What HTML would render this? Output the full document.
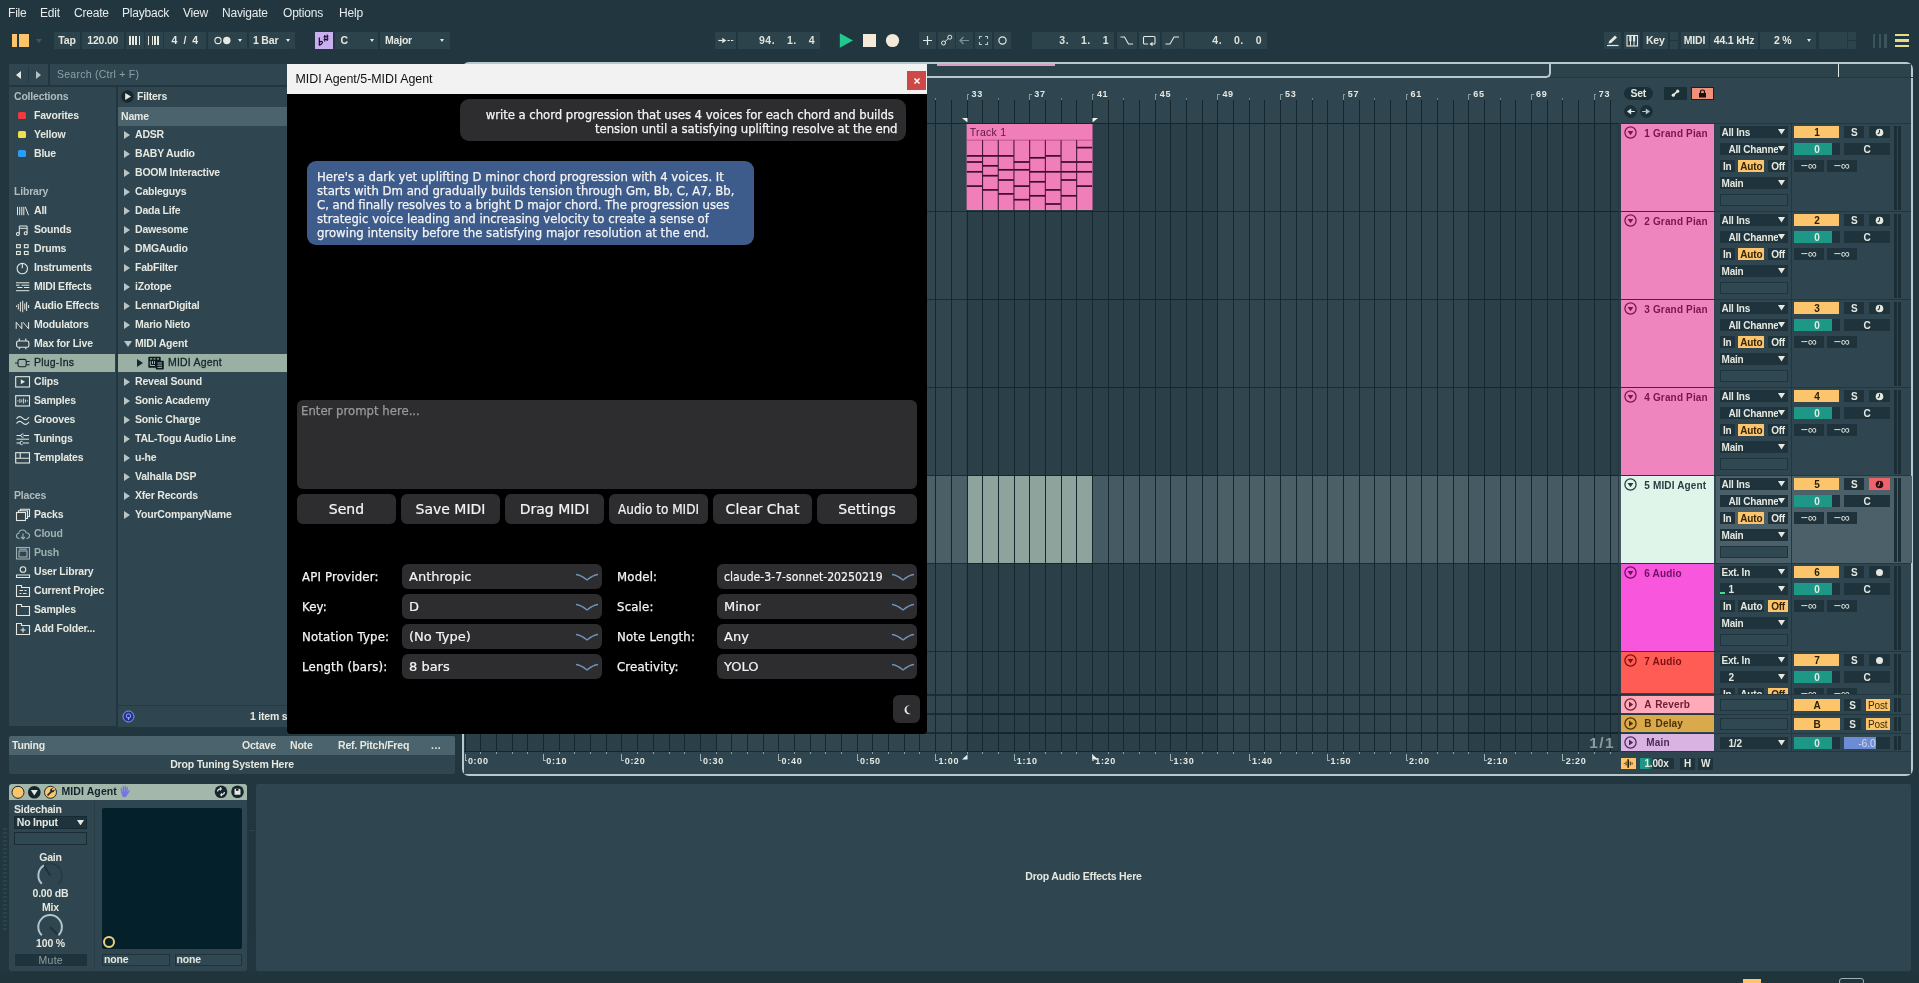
<!DOCTYPE html>
<html lang="en"><head><meta charset="utf-8"><title>MIDI Agent</title>
<style>
*{box-sizing:border-box;margin:0;padding:0}
html,body{width:1919px;height:983px;overflow:hidden;background:#21363e;}
body{position:relative;will-change:transform;font-family:"Liberation Sans",sans-serif;color:#e6e8e0;}
div,svg,span.a{position:absolute}
.t{font-weight:bold;white-space:nowrap;letter-spacing:-0.2px;color:#e6e8e0}
.m{font-family:"Liberation Sans",sans-serif;white-space:nowrap;font-size:12px;letter-spacing:-0.2px;color:#e8ecec}
.mono{font-family:"Liberation Mono",monospace;font-weight:bold;white-space:nowrap;color:#e6e8e0}
.j{font-family:"DejaVu Sans Condensed","DejaVu Sans",sans-serif;white-space:nowrap;color:#f4f4f4;-webkit-text-stroke:0.25px currentColor}
.jw{font-family:"DejaVu Sans",sans-serif;white-space:nowrap;color:#f4f4f4;-webkit-text-stroke:0.2px currentColor}
.tri{width:0;height:0;border-style:solid}
</style></head>
<body>
<div class="m" style="left:8px;top:5px;height:16px;line-height:16px">File</div>
<div class="m" style="left:40px;top:5px;height:16px;line-height:16px">Edit</div>
<div class="m" style="left:74px;top:5px;height:16px;line-height:16px">Create</div>
<div class="m" style="left:122px;top:5px;height:16px;line-height:16px">Playback</div>
<div class="m" style="left:183px;top:5px;height:16px;line-height:16px">View</div>
<div class="m" style="left:222px;top:5px;height:16px;line-height:16px">Navigate</div>
<div class="m" style="left:283px;top:5px;height:16px;line-height:16px">Options</div>
<div class="m" style="left:339px;top:5px;height:16px;line-height:16px">Help</div>
<div style="left:12px;top:34px;width:4.5px;height:13px;background:#fcc56c;"></div>
<div style="left:18.5px;top:34px;width:10.5px;height:13px;background:#fcc56c;"></div>
<div class="tri" style="left:35.5px;top:38.5px;border-width:4px 3.0px 0 3.0px;border-color:#41565f transparent transparent transparent"></div>
<div style="left:54px;top:32px;width:26px;height:17px;background:#2c434c;"><div class="t" style="left:0;top:0;width:26px;height:17px;line-height:17px;text-align:center;font-size:10.5px;">Tap</div></div>
<div style="left:82px;top:32px;width:41.5px;height:17px;background:#2c434c;"><div class="t" style="left:0;top:0;width:41.5px;height:17px;line-height:17px;text-align:center;font-size:10.5px;">120.00</div></div>
<div style="left:125.5px;top:32px;width:18.0px;height:17px;background:#2c434c;"><div style="left:3.2px;top:4.3px;width:2.5px;height:9.2px;background:#e6e8e0"></div><div style="left:6.8px;top:4.3px;width:1.8px;height:9.2px;background:#e6e8e0"></div><div style="left:9.9px;top:4.3px;width:1.3px;height:9.2px;background:#e6e8e0"></div><div style="left:13.3px;top:4.3px;width:1.2px;height:9.2px;background:#e6e8e0"></div></div>
<div style="left:145px;top:32px;width:17.5px;height:17px;background:#2c434c;"><div style="left:2.5px;top:4.3px;width:1.2px;height:9.2px;background:#e6e8e0"></div><div style="left:6.6px;top:4.3px;width:1.5px;height:9.2px;background:#e6e8e0"></div><div style="left:9.4px;top:4.3px;width:1.9px;height:9.2px;background:#e6e8e0"></div><div style="left:12.3px;top:4.3px;width:2.2px;height:9.2px;background:#e6e8e0"></div></div>
<div style="left:164px;top:32px;width:41.5px;height:17px;background:#2c434c;"><div class="t" style="left:0;top:0;width:41.5px;height:17px;line-height:17px;text-align:center;font-size:10.5px;word-spacing:3.5px;">4 / 4</div></div>
<div style="left:207.5px;top:32px;width:39.5px;height:17px;background:#2c434c;"><svg style="left:4px;top:3px" width="22" height="11" viewBox="0 0 22 11"><circle cx="6" cy="5.5" r="3.1" fill="none" stroke="#e6e8e0" stroke-width="1.1"/><circle cx="14.8" cy="5.5" r="3.7" fill="#e6e8e0"/></svg><div class="tri" style="left:30.5px;top:7px;border-width:3.5px 2.5px 0 2.5px;border-color:#e6e8e0 transparent transparent transparent"></div></div>
<div style="left:249px;top:32px;width:45.5px;height:17px;background:#2c434c;"><div class="t" style="left:4px;top:0;height:17px;line-height:17px;font-size:10.5px">1 Bar</div><div class="tri" style="left:36.5px;top:7px;border-width:3.5px 2.5px 0 2.5px;border-color:#e6e8e0 transparent transparent transparent"></div></div>
<div style="left:314.5px;top:32px;width:18px;height:17px;background:#c9aef2;"><svg style="left:0;top:0" width="18" height="17" viewBox="0 0 18 17"><path d="M4.3 5.5V13.5M4.3 10.2Q6 8.6 7.3 9.8Q8 11.5 4.3 13.5" fill="none" stroke="#1c0c28" stroke-width="1.2"/><path d="M9.8 3V9.5M12.2 2.5V9M8.5 5.3L13.5 4.3M8.5 7.8L13.5 6.8" fill="none" stroke="#1c0c28" stroke-width="1.1"/></svg></div>
<div style="left:334.5px;top:32px;width:43.0px;height:17px;background:#2c434c;"><div class="t" style="left:6px;top:0;height:17px;line-height:17px;font-size:10.5px">C</div><div class="tri" style="left:35.5px;top:7px;border-width:3.5px 2.5px 0 2.5px;border-color:#e6e8e0 transparent transparent transparent"></div></div>
<div style="left:380px;top:32px;width:70px;height:17px;background:#2c434c;"><div class="t" style="left:5px;top:0;height:17px;line-height:17px;font-size:10.5px">Major</div><div class="tri" style="left:59.5px;top:7px;border-width:3.5px 2.5px 0 2.5px;border-color:#e6e8e0 transparent transparent transparent"></div></div>
<div style="left:715px;top:32px;width:21px;height:17px;background:#2c434c;"><svg style="left:0;top:0" width="21" height="17" viewBox="0 0 21 17"><path d="M3.3 8.5H8" stroke="#e6e8e0" stroke-width="1.2"/><path d="M7.3 5.8L11.3 8.5L7.3 11.2Z" fill="#e6e8e0"/><path d="M12.5 8.5H14.8M16 8.5H18.3" stroke="#e6e8e0" stroke-width="1.1"/></svg></div>
<div style="left:738px;top:32px;width:82px;height:17px;background:#2c434c;"><div class="t" style="right:5px;top:0;height:17px;line-height:17px;font-size:10.5px;white-space:pre;word-spacing:8.5px;letter-spacing:0.5px;color:#dde2da">94. 1. 4</div></div>
<svg style="left:838px;top:32px" width="64" height="17" viewBox="0 0 64 17"><path d="M1.8 1.2L15 8.5L1.8 15.8Z" fill="#1fc98f"/><rect x="25" y="2" width="13" height="13" fill="#f3ead9"/><circle cx="54.5" cy="8.5" r="6.6" fill="#f3ead9"/></svg>
<div style="left:918.5px;top:32px;width:17.0px;height:17px;background:#2c434c;"><svg style="left:0;top:0" width="17.0" height="17" viewBox="0 0 17 17"><path d="M8.5 4V13M4 8.5H13" stroke="#e6e8e0" stroke-width="1.2"/></svg></div>
<div style="left:937.5px;top:32px;width:17.0px;height:17px;background:#2c434c;"><svg style="left:0;top:0" width="17.0" height="17" viewBox="0 0 17 17"><circle cx="5.5" cy="11" r="2" fill="none" stroke="#e6e8e0"/><circle cx="11.8" cy="5.2" r="2" fill="none" stroke="#e6e8e0"/><path d="M7 9.6L10.3 6.6" stroke="#e6e8e0"/></svg></div>
<div style="left:956px;top:32px;width:17px;height:17px;background:#2c434c;"><svg style="left:0;top:0" width="17" height="17" viewBox="0 0 17 17"><path d="M4 8.5H13M7.5 5L4 8.5L7.5 12" fill="none" stroke="#7f9298" stroke-width="1.2"/></svg></div>
<div style="left:975px;top:32px;width:17px;height:17px;background:#2c434c;"><svg style="left:0;top:0" width="17" height="17" viewBox="0 0 17 17"><path d="M4.5 7V4.5H7M10 4.5H12.5V7M12.5 10V12.5H10M7 12.5H4.5V10" fill="none" stroke="#b9c5c5" stroke-width="1.1"/></svg></div>
<div style="left:994px;top:32px;width:17px;height:17px;background:#2c434c;"><svg style="left:0;top:0" width="17" height="17" viewBox="0 0 17 17"><circle cx="8.5" cy="8.5" r="3.6" fill="none" stroke="#e6e8e0" stroke-width="1.2"/></svg></div>
<div style="left:1032px;top:32px;width:82px;height:17px;background:#2c434c;"><div class="t" style="right:5px;top:0;height:17px;line-height:17px;font-size:10.5px;white-space:pre;word-spacing:8.5px;letter-spacing:0.5px;color:#dde2da">3. 1. 1</div></div>
<div style="left:1116.5px;top:32px;width:20.0px;height:17px;background:#2c434c;"><svg style="left:0;top:0" width="20" height="17" viewBox="0 0 20 17"><path d="M3.5 5H7.5L11.5 12H16" fill="none" stroke="#e6e8e0" stroke-width="1.1"/></svg></div>
<div style="left:1139px;top:32px;width:20.5px;height:17px;background:#2c434c;"><svg style="left:0;top:0" width="20.5" height="17" viewBox="0 0 20.5 17"><path d="M9 12H5.5Q4.5 12 4.5 11V5.5Q4.5 4.5 5.5 4.5H15Q16 4.5 16 5.5V11Q16 12 15 12H12" fill="none" stroke="#e6e8e0" stroke-width="1.1"/><path d="M13.5 9.8L10.5 12L13.5 14.2Z" fill="#e6e8e0"/></svg></div>
<div style="left:1162px;top:32px;width:21px;height:17px;background:#2c434c;"><svg style="left:0;top:0" width="21" height="17" viewBox="0 0 21 17"><path d="M3.5 12H8L12 5H17" fill="none" stroke="#e6e8e0" stroke-width="1.1"/></svg></div>
<div style="left:1185px;top:32px;width:82px;height:17px;background:#2c434c;"><div class="t" style="right:5px;top:0;height:17px;line-height:17px;font-size:10.5px;white-space:pre;word-spacing:8.5px;letter-spacing:0.5px;color:#dde2da">4. 0. 0</div></div>
<div style="left:1603.5px;top:32px;width:17.5px;height:17px;background:#2c434c;"><svg style="left:0;top:0" width="17.5" height="17" viewBox="0 0 17.5 17"><path d="M4.5 11.5L5.2 9L11 3.5L13 5.5L7.2 11Z" fill="#e6e8e0"/><path d="M3 13.5H14.5" stroke="#e6e8e0" stroke-width="1.2"/></svg></div>
<div style="left:1623.5px;top:32px;width:16.5px;height:17px;background:#2c434c;"><svg style="left:0;top:0" width="16.5" height="17" viewBox="0 0 16.5 17"><rect x="3" y="3.5" width="10.5" height="10.5" fill="none" stroke="#e6e8e0" stroke-width="1.1"/><path d="M6.5 9V14M10 9V14" stroke="#e6e8e0" stroke-width="1"/><rect x="5.3" y="3.5" width="2.2" height="5.8" fill="#e6e8e0"/><rect x="9" y="3.5" width="2.2" height="5.8" fill="#e6e8e0"/></svg></div>
<div style="left:1642.5px;top:32px;width:25.5px;height:17px;background:#2c434c;"><div class="t" style="left:0;top:0;width:25.5px;height:17px;line-height:17px;text-align:center;font-size:10.5px;">Key</div></div>
<div style="left:1670px;top:32px;width:8.3px;height:8px;background:#2c434c;"></div>
<div style="left:1670px;top:41px;width:8.3px;height:8px;background:#2c434c;"></div>
<div style="left:1680.5px;top:32px;width:28.0px;height:17px;background:#2c434c;"><div class="t" style="left:0;top:0;width:28.0px;height:17px;line-height:17px;text-align:center;font-size:10.5px;">MIDI</div></div>
<div style="left:1710px;top:32px;width:48px;height:17px;background:#2c434c;"><div class="t" style="left:0;top:0;width:48px;height:17px;line-height:17px;text-align:center;font-size:10.5px;">44.1 kHz</div></div>
<div style="left:1760px;top:32px;width:56px;height:17px;background:#2c434c;"><div class="t" style="left:14px;top:0;height:17px;line-height:17px;font-size:10.5px">2 %</div><div class="tri" style="left:47px;top:7px;border-width:3.5px 2.5px 0 2.5px;border-color:#e6e8e0 transparent transparent transparent"></div></div>
<div style="left:1818.5px;top:32px;width:28.0px;height:17px;background:#2c434c;"></div>
<div style="left:1848px;top:32px;width:8px;height:8px;background:#2c434c;"></div>
<div style="left:1848px;top:41px;width:8px;height:8px;background:#2c434c;"></div>
<div style="left:1873.0px;top:33.5px;width:2.4px;height:14px;background:#3b535c;"></div>
<div style="left:1878.7px;top:33.5px;width:2.4px;height:14px;background:#3b535c;"></div>
<div style="left:1884.4px;top:33.5px;width:2.4px;height:14px;background:#3b535c;"></div>
<div style="left:1895px;top:33.5px;width:13.5px;height:2.6px;background:#e6dc86;"></div>
<div style="left:1895px;top:39.2px;width:13.5px;height:2.6px;background:#e6dc86;"></div>
<div style="left:1895px;top:44.9px;width:13.5px;height:2.6px;background:#e6dc86;"></div>
<div style="left:9px;top:64px;width:39px;height:21px;background:#2f4650;"></div>
<div style="left:28px;top:66px;width:1px;height:17px;background:#253a43;"></div>
<div class="tri" style="left:15.5px;top:70.5px;border-width:4px 5px 4px 0;border-color:transparent #e6e8e0 transparent transparent"></div>
<div class="tri" style="left:35.5px;top:70.5px;border-width:4px 0 4px 5px;border-color:transparent transparent transparent #b5c1c2"></div>
<div style="left:50px;top:64px;width:240px;height:21px;background:#2f4650;"></div>
<div class="t" style="left:57px;top:67.0px;height:14px;line-height:14px;font-size:10.5px;color:#8fa0a4;font-weight:normal;letter-spacing:0.25px">Search (Ctrl + F)</div>
<div style="left:9px;top:87px;width:106.5px;height:639px;background:#2f4650;"></div>
<div style="left:117.5px;top:87px;width:172px;height:640px;background:#2f4650;"></div>
<div style="left:117.5px;top:107px;width:172px;height:19px;background:#4a636c;"></div>
<div style="left:117.5px;top:354px;width:172px;height:17.7px;background:#9bb0a5;"></div>
<div style="left:9px;top:354px;width:106px;height:17.7px;background:#9bb0a5;"></div>
<div style="left:117.5px;top:705px;width:172px;height:1px;background:#253a43;"></div>
<div class="t" style="left:14px;top:89.0px;height:14px;line-height:14px;font-size:10.5px;color:#b0bcbe;">Collections</div>
<div style="left:18px;top:111.5px;width:7.5px;height:7.5px;background:#f03a3a;border-radius:1.5px;"></div>
<div class="t" style="left:34px;top:108.0px;height:14px;line-height:14px;font-size:10.5px;">Favorites</div>
<div style="left:18px;top:130.5px;width:7.5px;height:7.5px;background:#f2e04a;border-radius:1.5px;"></div>
<div class="t" style="left:34px;top:127.0px;height:14px;line-height:14px;font-size:10.5px;">Yellow</div>
<div style="left:18px;top:149.5px;width:7.5px;height:7.5px;background:#2a9df4;border-radius:1.5px;"></div>
<div class="t" style="left:34px;top:146.0px;height:14px;line-height:14px;font-size:10.5px;">Blue</div>
<div class="t" style="left:14px;top:184.0px;height:14px;line-height:14px;font-size:10.5px;color:#b0bcbe;">Library</div>
<div class="t" style="left:14px;top:488.0px;height:14px;line-height:14px;font-size:10.5px;color:#b0bcbe;">Places</div>
<svg style="left:15px;top:203.5px" width="17" height="14" viewBox="0 0 17 14" fill="none" stroke="#e6e8e0" stroke-width="1.1"><path d="M2.5 2.8V11.2M4.7 2.8V11.2M6.8 2.8V11.2M8.8 2.8V11.2M10.3 2.8L13.5 11.2" stroke-width="1"/></svg>
<div class="t" style="left:34px;top:203.0px;height:14px;line-height:14px;font-size:10.5px;">All</div>
<svg style="left:15px;top:222.5px" width="17" height="14" viewBox="0 0 17 14" fill="none" stroke="#e6e8e0" stroke-width="1.1"><path d="M4.3 10.5V3H12.1V9.8M4.3 5.3H12.1" stroke-width="1"/><circle cx="2.9" cy="11" r="1.5"/><circle cx="10.7" cy="10.2" r="1.5"/></svg>
<div class="t" style="left:34px;top:222.0px;height:14px;line-height:14px;font-size:10.5px;">Sounds</div>
<svg style="left:15px;top:241.5px" width="17" height="14" viewBox="0 0 17 14" fill="none" stroke="#e6e8e0" stroke-width="1.1"><rect x="1.6" y="2.7" width="3.7" height="3"/><rect x="9.4" y="2.7" width="3.7" height="3"/><rect x="1.6" y="9.5" width="3.7" height="3"/><rect x="9.4" y="9.5" width="3.7" height="3"/></svg>
<div class="t" style="left:34px;top:241.0px;height:14px;line-height:14px;font-size:10.5px;">Drums</div>
<svg style="left:15px;top:260.5px" width="17" height="14" viewBox="0 0 17 14" fill="none" stroke="#e6e8e0" stroke-width="1.1"><circle cx="7.3" cy="7.6" r="5.2"/><path d="M7.3 2.5V7.3"/></svg>
<div class="t" style="left:34px;top:260.0px;height:14px;line-height:14px;font-size:10.5px;">Instruments</div>
<svg style="left:15px;top:279.5px" width="17" height="14" viewBox="0 0 17 14" fill="none" stroke="#e6e8e0" stroke-width="1.1"><path d="M1 2.8H14.3M1 5.2H4.5M6.5 5.2H14.3M2.2 7.5H7.5M9 7.5H14.3M1 10.7H14.3" stroke-width="1"/></svg>
<div class="t" style="left:34px;top:279.0px;height:14px;line-height:14px;font-size:10.5px;">MIDI Effects</div>
<svg style="left:15px;top:298.5px" width="17" height="14" viewBox="0 0 17 14" fill="none" stroke="#e6e8e0" stroke-width="1.1"><path d="M1.5 6.5V8M3.3 5V10.5M5.4 3V12.5M7.7 1.8V13.2M9.8 4.5V10.5M11.6 3V12M13.6 6V9" stroke-width="1"/></svg>
<div class="t" style="left:34px;top:298.0px;height:14px;line-height:14px;font-size:10.5px;">Audio Effects</div>
<svg style="left:15px;top:317.5px" width="17" height="14" viewBox="0 0 17 14" fill="none" stroke="#e6e8e0" stroke-width="1.1"><path d="M1.2 10.8V4.2L6.8 10.8V4.2M8 4.2L13.6 10.8V4.2" stroke-width="1"/></svg>
<div class="t" style="left:34px;top:317.0px;height:14px;line-height:14px;font-size:10.5px;">Modulators</div>
<svg style="left:15px;top:336.5px" width="17" height="14" viewBox="0 0 17 14" fill="none" stroke="#e6e8e0" stroke-width="1.1"><rect x="1.6" y="4" width="12.3" height="6.2" rx="1.8"/><path d="M4.3 1.5V4M10.8 1.5V4M4.3 10.2V12.2M10.8 10.2V12.2"/></svg>
<div class="t" style="left:34px;top:336.0px;height:14px;line-height:14px;font-size:10.5px;">Max for Live</div>
<svg style="left:15px;top:355.5px" width="17" height="14" viewBox="0 0 17 14" fill="none" stroke="#16262d" stroke-width="1.1"><path d="M-0.5 7H3M11.2 5.5H14.6M11.2 8.7H14.6"/><rect x="3" y="3.4" width="8.2" height="7.3" rx="1.8"/></svg>
<div class="t" style="left:34px;top:355.0px;height:14px;line-height:14px;font-size:10.5px;color:#16262d;font-weight:normal;letter-spacing:0.2px;-webkit-text-stroke:0.3px #16262d;">Plug-Ins</div>
<svg style="left:15px;top:374.5px" width="17" height="14" viewBox="0 0 17 14" fill="none" stroke="#e6e8e0" stroke-width="1.1"><rect x="0.7" y="1.7" width="13.8" height="10.3"/><path d="M5.8 4.3L10 6.8L5.8 9.3Z" fill="#e6e8e0" stroke="none"/></svg>
<div class="t" style="left:34px;top:374.0px;height:14px;line-height:14px;font-size:10.5px;">Clips</div>
<svg style="left:15px;top:393.5px" width="17" height="14" viewBox="0 0 17 14" fill="none" stroke="#e6e8e0" stroke-width="1.1"><rect x="0.7" y="1.7" width="13.8" height="10.3"/><path d="M3 6.3V7.5M4.9 4.8V9M6.8 5.5V8.3M8.6 4.3V9.5M10.5 5.5V8.3M12.3 6.3V7.5" stroke-width="0.9"/></svg>
<div class="t" style="left:34px;top:393.0px;height:14px;line-height:14px;font-size:10.5px;">Samples</div>
<svg style="left:15px;top:412.5px" width="17" height="14" viewBox="0 0 17 14" fill="none" stroke="#e6e8e0" stroke-width="1.1"><path d="M1.5 5.8Q4.2 1.8 7.6 5.2T14 4.3M1.5 10.5Q4.2 6.5 7.6 9.9T14 9"/></svg>
<div class="t" style="left:34px;top:412.0px;height:14px;line-height:14px;font-size:10.5px;">Grooves</div>
<svg style="left:15px;top:431.5px" width="17" height="14" viewBox="0 0 17 14" fill="none" stroke="#e6e8e0" stroke-width="1.1"><path d="M1.5 3.5H6M8.5 3.5H14M1.5 7.2H14M1.5 11H5M7.5 11H14M8.5 2H7.5Q6 2 6 3.5Q6 5.2 7.5 5.2H8.5M7.5 9.3H6.5Q5 9.3 5 11Q5 12.6 6.5 12.6H7.5" stroke-width="1"/></svg>
<div class="t" style="left:34px;top:431.0px;height:14px;line-height:14px;font-size:10.5px;">Tunings</div>
<svg style="left:15px;top:450.5px" width="17" height="14" viewBox="0 0 17 14" fill="none" stroke="#e6e8e0" stroke-width="1.1"><rect x="0.7" y="1.7" width="13.8" height="10.3"/><path d="M0.7 7.3H14.5M5.2 1.7V7.3"/></svg>
<div class="t" style="left:34px;top:450.0px;height:14px;line-height:14px;font-size:10.5px;">Templates</div>
<svg style="left:15px;top:507.5px" width="17" height="14" viewBox="0 0 17 14" fill="none" stroke="#e6e8e0" stroke-width="1.1"><rect x="1.5" y="4.5" width="9" height="8"/><path d="M3.5 4.5V2.8H12.5V10.5H10.5M5.5 2.8V1.2H14.5V8.5H12.5"/></svg>
<div class="t" style="left:34px;top:507.0px;height:14px;line-height:14px;font-size:10.5px;color:#e6e8e0;">Packs</div>
<svg style="left:15px;top:526.5px" width="17" height="14" viewBox="0 0 17 14" fill="none" stroke="#9fb0b3" stroke-width="1.1"><path d="M4.5 11.5H3.8Q1.5 11 1.5 8.8Q1.5 6.8 3.8 6.3Q4.2 3 7.5 3Q10.5 3 11.2 5.8Q14.5 6 14.5 8.8Q14.5 11 12 11.5H11.5"/><path d="M8 6.5V12M6 10L8 12L10 10"/></svg>
<div class="t" style="left:34px;top:526.0px;height:14px;line-height:14px;font-size:10.5px;color:#9fb0b3;">Cloud</div>
<svg style="left:15px;top:545.5px" width="17" height="14" viewBox="0 0 17 14" fill="none" stroke="#9fb0b3" stroke-width="1.1"><rect x="1.5" y="1.5" width="13" height="11.5"/><rect x="4" y="5" width="8" height="6"/><path d="M4 3.2H12"/></svg>
<div class="t" style="left:34px;top:545.0px;height:14px;line-height:14px;font-size:10.5px;color:#9fb0b3;">Push</div>
<svg style="left:15px;top:564.5px" width="17" height="14" viewBox="0 0 17 14" fill="none" stroke="#e6e8e0" stroke-width="1.1"><circle cx="8" cy="4.5" r="2.8"/><path d="M1.5 12.5V10H14.5V12.5Z"/></svg>
<div class="t" style="left:34px;top:564.0px;height:14px;line-height:14px;font-size:10.5px;color:#e6e8e0;">User Library</div>
<svg style="left:15px;top:583.5px" width="17" height="14" viewBox="0 0 17 14" fill="none" stroke="#e6e8e0" stroke-width="1.1"><path d="M1.5 12.5V1.5H6.5V3.5H14.5V12.5Z"/><path d="M4.5 6.5H8M9.5 6.5H11.5M4.5 9.5H6.5M8 9.5H11.5"/></svg>
<div class="t" style="left:34px;top:583.0px;height:14px;line-height:14px;font-size:10.5px;color:#e6e8e0;">Current Projec</div>
<svg style="left:15px;top:602.5px" width="17" height="14" viewBox="0 0 17 14" fill="none" stroke="#e6e8e0" stroke-width="1.1"><path d="M1.5 12.5V1.5H6.5V3.5H14.5V12.5Z"/></svg>
<div class="t" style="left:34px;top:602.0px;height:14px;line-height:14px;font-size:10.5px;color:#e6e8e0;">Samples</div>
<svg style="left:15px;top:621.5px" width="17" height="14" viewBox="0 0 17 14" fill="none" stroke="#e6e8e0" stroke-width="1.1"><path d="M1.5 12.5V1.5H6.5V3.5H14.5V12.5Z"/><path d="M8 5.5V10.5M5.5 8H10.5"/></svg>
<div class="t" style="left:34px;top:621.0px;height:14px;line-height:14px;font-size:10.5px;color:#e6e8e0;">Add Folder...</div>
<svg style="left:121px;top:90px" width="13" height="13" viewBox="0 0 13 13"><circle cx="6.5" cy="6.5" r="6.2" fill="#16262d"/><path d="M4.2 3L10 6.5L4.2 10Z" fill="#e6e8e0"/></svg>
<div class="t" style="left:137px;top:89.0px;height:14px;line-height:14px;font-size:10.5px;">Filters</div>
<div class="t" style="left:121px;top:109.0px;height:14px;line-height:14px;font-size:10.5px;">Name</div>
<div class="tri" style="left:124px;top:130.5px;border-width:4px 0 4px 6px;border-color:transparent transparent transparent #b9c5c5"></div>
<div class="t" style="left:135px;top:127.0px;height:14px;line-height:14px;font-size:10.5px;">ADSR</div>
<div class="tri" style="left:124px;top:149.5px;border-width:4px 0 4px 6px;border-color:transparent transparent transparent #b9c5c5"></div>
<div class="t" style="left:135px;top:146.0px;height:14px;line-height:14px;font-size:10.5px;">BABY Audio</div>
<div class="tri" style="left:124px;top:168.5px;border-width:4px 0 4px 6px;border-color:transparent transparent transparent #b9c5c5"></div>
<div class="t" style="left:135px;top:165.0px;height:14px;line-height:14px;font-size:10.5px;">BOOM Interactive</div>
<div class="tri" style="left:124px;top:187.5px;border-width:4px 0 4px 6px;border-color:transparent transparent transparent #b9c5c5"></div>
<div class="t" style="left:135px;top:184.0px;height:14px;line-height:14px;font-size:10.5px;">Cableguys</div>
<div class="tri" style="left:124px;top:206.5px;border-width:4px 0 4px 6px;border-color:transparent transparent transparent #b9c5c5"></div>
<div class="t" style="left:135px;top:203.0px;height:14px;line-height:14px;font-size:10.5px;">Dada Life</div>
<div class="tri" style="left:124px;top:225.5px;border-width:4px 0 4px 6px;border-color:transparent transparent transparent #b9c5c5"></div>
<div class="t" style="left:135px;top:222.0px;height:14px;line-height:14px;font-size:10.5px;">Dawesome</div>
<div class="tri" style="left:124px;top:244.5px;border-width:4px 0 4px 6px;border-color:transparent transparent transparent #b9c5c5"></div>
<div class="t" style="left:135px;top:241.0px;height:14px;line-height:14px;font-size:10.5px;">DMGAudio</div>
<div class="tri" style="left:124px;top:263.5px;border-width:4px 0 4px 6px;border-color:transparent transparent transparent #b9c5c5"></div>
<div class="t" style="left:135px;top:260.0px;height:14px;line-height:14px;font-size:10.5px;">FabFilter</div>
<div class="tri" style="left:124px;top:282.5px;border-width:4px 0 4px 6px;border-color:transparent transparent transparent #b9c5c5"></div>
<div class="t" style="left:135px;top:279.0px;height:14px;line-height:14px;font-size:10.5px;">iZotope</div>
<div class="tri" style="left:124px;top:301.5px;border-width:4px 0 4px 6px;border-color:transparent transparent transparent #b9c5c5"></div>
<div class="t" style="left:135px;top:298.0px;height:14px;line-height:14px;font-size:10.5px;">LennarDigital</div>
<div class="tri" style="left:124px;top:320.5px;border-width:4px 0 4px 6px;border-color:transparent transparent transparent #b9c5c5"></div>
<div class="t" style="left:135px;top:317.0px;height:14px;line-height:14px;font-size:10.5px;">Mario Nieto</div>
<div class="tri" style="left:123.5px;top:340.5px;border-width:6px 4px 0 4px;border-color:#b9c5c5 transparent transparent transparent"></div>
<div class="t" style="left:135px;top:336.0px;height:14px;line-height:14px;font-size:10.5px;">MIDI Agent</div>
<div class="tri" style="left:137px;top:358.5px;border-width:4px 0 4px 6px;border-color:transparent transparent transparent #16262d"></div>
<svg style="left:148px;top:356.0px" width="16" height="14" viewBox="0 0 16 14"><rect x="0.3" y="0.8" width="12.4" height="11" rx="0.8" fill="#0e1a20"/><path d="M2 2.8H4.2M5.5 2.8H7.5M9 2.8H11" stroke="#9bb0a5" stroke-width="1.2"/><path d="M2.3 5V9.5H7M4.5 5V8M6.5 5V8" fill="none" stroke="#9bb0a5" stroke-width="1"/><rect x="7.8" y="4.8" width="8" height="8.7" rx="0.8" fill="#0e1a20"/><path d="M9.5 7H14M9.5 9.2H14M9.5 11.4H14" stroke="#9bb0a5" stroke-width="1"/></svg>
<div class="t" style="left:168px;top:355.2px;height:14px;line-height:14px;font-size:10.5px;color:#16262d;font-weight:normal;letter-spacing:0.2px;-webkit-text-stroke:0.3px #16262d;">MIDI Agent</div>
<div class="tri" style="left:124px;top:377.5px;border-width:4px 0 4px 6px;border-color:transparent transparent transparent #b9c5c5"></div>
<div class="t" style="left:135px;top:374.0px;height:14px;line-height:14px;font-size:10.5px;">Reveal Sound</div>
<div class="tri" style="left:124px;top:396.5px;border-width:4px 0 4px 6px;border-color:transparent transparent transparent #b9c5c5"></div>
<div class="t" style="left:135px;top:393.0px;height:14px;line-height:14px;font-size:10.5px;">Sonic Academy</div>
<div class="tri" style="left:124px;top:415.5px;border-width:4px 0 4px 6px;border-color:transparent transparent transparent #b9c5c5"></div>
<div class="t" style="left:135px;top:412.0px;height:14px;line-height:14px;font-size:10.5px;">Sonic Charge</div>
<div class="tri" style="left:124px;top:434.5px;border-width:4px 0 4px 6px;border-color:transparent transparent transparent #b9c5c5"></div>
<div class="t" style="left:135px;top:431.0px;height:14px;line-height:14px;font-size:10.5px;">TAL-Togu Audio Line</div>
<div class="tri" style="left:124px;top:453.5px;border-width:4px 0 4px 6px;border-color:transparent transparent transparent #b9c5c5"></div>
<div class="t" style="left:135px;top:450.0px;height:14px;line-height:14px;font-size:10.5px;">u-he</div>
<div class="tri" style="left:124px;top:472.5px;border-width:4px 0 4px 6px;border-color:transparent transparent transparent #b9c5c5"></div>
<div class="t" style="left:135px;top:469.0px;height:14px;line-height:14px;font-size:10.5px;">Valhalla DSP</div>
<div class="tri" style="left:124px;top:491.5px;border-width:4px 0 4px 6px;border-color:transparent transparent transparent #b9c5c5"></div>
<div class="t" style="left:135px;top:488.0px;height:14px;line-height:14px;font-size:10.5px;">Xfer Records</div>
<div class="tri" style="left:124px;top:510.5px;border-width:4px 0 4px 6px;border-color:transparent transparent transparent #b9c5c5"></div>
<div class="t" style="left:135px;top:507.0px;height:14px;line-height:14px;font-size:10.5px;">YourCompanyName</div>
<svg style="left:122px;top:710px" width="13" height="13" viewBox="0 0 13 13"><circle cx="6.5" cy="6.5" r="5.5" fill="#22309a" stroke="#8ea0c8" stroke-width="1"/><circle cx="6.5" cy="6" r="2.2" fill="none" stroke="#9fb4e0" stroke-width="0.9"/><path d="M6.5 7V10" stroke="#9fb4e0" stroke-width="0.9"/></svg>
<div class="t" style="left:250px;top:709.0px;height:14px;line-height:14px;font-size:10.5px;">1 item selected</div>
<div style="left:9px;top:736px;width:446px;height:37.5px;background:#2f4650;border-radius:2px;"></div>
<div style="left:9px;top:736px;width:446px;height:18.5px;background:#4a636c;border-radius:2px 2px 0 0;"></div>
<div class="t" style="left:12px;top:738.0px;height:14px;line-height:14px;font-size:10.5px;">Tuning</div>
<div class="t" style="left:242px;top:738.0px;height:14px;line-height:14px;font-size:10.5px;">Octave</div>
<div class="t" style="left:290px;top:738.0px;height:14px;line-height:14px;font-size:10.5px;">Note</div>
<div class="t" style="left:338px;top:738.0px;height:14px;line-height:14px;font-size:10.5px;">Ref. Pitch/Freq</div>
<div class="t" style="left:431px;top:737.5px;height:14px;line-height:14px;font-size:10.5px;letter-spacing:0.5px">...</div>
<div class="t" style="left:9px;top:757.0px;height:14px;line-height:14px;font-size:10.5px;width:446px;text-align:center;">Drop Tuning System Here</div>
<div style="left:462px;top:62px;width:1451px;height:714px;background:#2f4650;border:2px solid #b7c9cc;border-radius:7px;"></div>
<div style="left:464px;top:64px;width:1447px;height:13px;background:#2c434c;"></div>
<div style="left:1550px;top:76.5px;width:1361px;height:1.5px;background:#22373f;"></div>
<div style="left:464px;top:63px;width:1087px;height:15px;border-right:2.5px solid #b7c9cc;border-bottom:2.5px solid #b7c9cc;border-bottom-right-radius:5px;"></div>
<div style="left:936.5px;top:63.5px;width:118px;height:2.5px;background:#d9a0c6;"></div>
<div style="left:1837.5px;top:64px;width:1.5px;height:13px;background:#dfe8e8;"></div>
<div style="left:464px;top:100px;width:1156.5px;height:652px;background:#15262d;"></div>
<div style="left:464px;top:100px;width:1156.5px;height:23px;background:#2f4650;"></div>
<div style="left:464px;top:124px;width:1156.5px;height:87px;background:#2b3f49;"></div>
<div style="left:464px;top:212px;width:1156.5px;height:87px;background:#2b3f49;"></div>
<div style="left:464px;top:300px;width:1156.5px;height:87px;background:#2b3f49;"></div>
<div style="left:464px;top:388px;width:1156.5px;height:87px;background:#2b3f49;"></div>
<div style="left:464px;top:476px;width:1156.5px;height:87px;background:#465a63;"></div>
<div style="left:464px;top:564px;width:1156.5px;height:87px;background:#2b3f49;"></div>
<div style="left:464px;top:652px;width:1156.5px;height:42px;background:#2b3f49;"></div>
<div style="left:464px;top:696px;width:1156.5px;height:17px;background:#2b3f49;"></div>
<div style="left:464px;top:715px;width:1156.5px;height:17px;background:#2b3f49;"></div>
<div style="left:464px;top:734px;width:1156.5px;height:17px;background:#2b3f49;"></div>
<div style="left:715.5px;top:124px;width:250.9px;height:628px;background:rgba(255,255,255,0.032);"></div>
<div style="left:1217.4px;top:124px;width:250.9px;height:628px;background:rgba(255,255,255,0.032);"></div>
<div style="left:966.5px;top:476px;width:126px;height:87px;background:#8da39b;"></div>
<div style="left:464px;top:100px;width:1156.5px;height:652px;"><div style="left:0.6px;top:0;width:1px;height:652px;background:#15262d"></div><div style="left:16.3px;top:0;width:1px;height:652px;background:#15262d"></div><div style="left:32.0px;top:0;width:1px;height:652px;background:#15262d"></div><div style="left:47.6px;top:0;width:1px;height:652px;background:#15262d"></div><div style="left:63.3px;top:0;width:1px;height:652px;background:#15262d"></div><div style="left:79.0px;top:0;width:1px;height:652px;background:#15262d"></div><div style="left:94.7px;top:0;width:1px;height:652px;background:#15262d"></div><div style="left:110.4px;top:0;width:1px;height:652px;background:#15262d"></div><div style="left:126.1px;top:0;width:1px;height:652px;background:#15262d"></div><div style="left:141.7px;top:0;width:1px;height:652px;background:#15262d"></div><div style="left:157.4px;top:0;width:1px;height:652px;background:#15262d"></div><div style="left:173.1px;top:0;width:1px;height:652px;background:#15262d"></div><div style="left:188.8px;top:0;width:1px;height:652px;background:#15262d"></div><div style="left:204.5px;top:0;width:1px;height:652px;background:#15262d"></div><div style="left:220.2px;top:0;width:1px;height:652px;background:#15262d"></div><div style="left:235.8px;top:0;width:1px;height:652px;background:#15262d"></div><div style="left:251.5px;top:0;width:1px;height:652px;background:#15262d"></div><div style="left:267.2px;top:0;width:1px;height:652px;background:#15262d"></div><div style="left:282.9px;top:0;width:1px;height:652px;background:#15262d"></div><div style="left:298.6px;top:0;width:1px;height:652px;background:#15262d"></div><div style="left:314.3px;top:0;width:1px;height:652px;background:#15262d"></div><div style="left:329.9px;top:0;width:1px;height:652px;background:#15262d"></div><div style="left:345.6px;top:0;width:1px;height:652px;background:#15262d"></div><div style="left:361.3px;top:0;width:1px;height:652px;background:#15262d"></div><div style="left:377.0px;top:0;width:1px;height:652px;background:#15262d"></div><div style="left:392.7px;top:0;width:1px;height:652px;background:#15262d"></div><div style="left:408.4px;top:0;width:1px;height:652px;background:#15262d"></div><div style="left:424.0px;top:0;width:1px;height:652px;background:#15262d"></div><div style="left:439.7px;top:0;width:1px;height:652px;background:#15262d"></div><div style="left:455.4px;top:0;width:1px;height:652px;background:#15262d"></div><div style="left:471.1px;top:0;width:1px;height:652px;background:#15262d"></div><div style="left:486.8px;top:0;width:1px;height:652px;background:#15262d"></div><div style="left:502.5px;top:0;width:1px;height:652px;background:#15262d"></div><div style="left:518.1px;top:0;width:1px;height:652px;background:#15262d"></div><div style="left:533.8px;top:0;width:1px;height:652px;background:#15262d"></div><div style="left:549.5px;top:0;width:1px;height:652px;background:#15262d"></div><div style="left:565.2px;top:0;width:1px;height:652px;background:#15262d"></div><div style="left:580.9px;top:0;width:1px;height:652px;background:#15262d"></div><div style="left:596.6px;top:0;width:1px;height:652px;background:#15262d"></div><div style="left:612.2px;top:0;width:1px;height:652px;background:#15262d"></div><div style="left:627.9px;top:0;width:1px;height:652px;background:#15262d"></div><div style="left:643.6px;top:0;width:1px;height:652px;background:#15262d"></div><div style="left:659.3px;top:0;width:1px;height:652px;background:#15262d"></div><div style="left:675.0px;top:0;width:1px;height:652px;background:#15262d"></div><div style="left:690.7px;top:0;width:1px;height:652px;background:#15262d"></div><div style="left:706.3px;top:0;width:1px;height:652px;background:#15262d"></div><div style="left:722.0px;top:0;width:1px;height:652px;background:#15262d"></div><div style="left:737.7px;top:0;width:1px;height:652px;background:#15262d"></div><div style="left:753.4px;top:0;width:1px;height:652px;background:#15262d"></div><div style="left:769.1px;top:0;width:1px;height:652px;background:#15262d"></div><div style="left:784.8px;top:0;width:1px;height:652px;background:#15262d"></div><div style="left:800.4px;top:0;width:1px;height:652px;background:#15262d"></div><div style="left:816.1px;top:0;width:1px;height:652px;background:#15262d"></div><div style="left:831.8px;top:0;width:1px;height:652px;background:#15262d"></div><div style="left:847.5px;top:0;width:1px;height:652px;background:#15262d"></div><div style="left:863.2px;top:0;width:1px;height:652px;background:#15262d"></div><div style="left:878.8px;top:0;width:1px;height:652px;background:#15262d"></div><div style="left:894.5px;top:0;width:1px;height:652px;background:#15262d"></div><div style="left:910.2px;top:0;width:1px;height:652px;background:#15262d"></div><div style="left:925.9px;top:0;width:1px;height:652px;background:#15262d"></div><div style="left:941.6px;top:0;width:1px;height:652px;background:#15262d"></div><div style="left:957.3px;top:0;width:1px;height:652px;background:#15262d"></div><div style="left:972.9px;top:0;width:1px;height:652px;background:#15262d"></div><div style="left:988.6px;top:0;width:1px;height:652px;background:#15262d"></div><div style="left:1004.3px;top:0;width:1px;height:652px;background:#15262d"></div><div style="left:1020.0px;top:0;width:1px;height:652px;background:#15262d"></div><div style="left:1035.7px;top:0;width:1px;height:652px;background:#15262d"></div><div style="left:1051.4px;top:0;width:1px;height:652px;background:#15262d"></div><div style="left:1067.0px;top:0;width:1px;height:652px;background:#15262d"></div><div style="left:1082.7px;top:0;width:1px;height:652px;background:#15262d"></div><div style="left:1098.4px;top:0;width:1px;height:652px;background:#15262d"></div><div style="left:1114.1px;top:0;width:1px;height:652px;background:#15262d"></div><div style="left:1129.8px;top:0;width:1px;height:652px;background:#15262d"></div><div style="left:1145.5px;top:0;width:1px;height:652px;background:#15262d"></div></div>
<div style="left:966.5px;top:93.5px;width:1px;height:6.5px;background:#8499a0;"></div>
<div style="left:966.5px;top:93.5px;width:2.5px;height:1px;background:#8499a0;"></div>
<div class="t" style="left:971.5px;top:86.8px;height:14px;line-height:14px;font-size:9px;letter-spacing:0.7px;">33</div>
<div style="left:1029.2px;top:93.5px;width:1px;height:6.5px;background:#8499a0;"></div>
<div style="left:1029.2px;top:93.5px;width:2.5px;height:1px;background:#8499a0;"></div>
<div class="t" style="left:1034.2px;top:86.8px;height:14px;line-height:14px;font-size:9px;letter-spacing:0.7px;">37</div>
<div style="left:1091.9px;top:93.5px;width:1px;height:6.5px;background:#8499a0;"></div>
<div style="left:1091.9px;top:93.5px;width:2.5px;height:1px;background:#8499a0;"></div>
<div class="t" style="left:1096.9px;top:86.8px;height:14px;line-height:14px;font-size:9px;letter-spacing:0.7px;">41</div>
<div style="left:1154.7px;top:93.5px;width:1px;height:6.5px;background:#8499a0;"></div>
<div style="left:1154.7px;top:93.5px;width:2.5px;height:1px;background:#8499a0;"></div>
<div class="t" style="left:1159.7px;top:86.8px;height:14px;line-height:14px;font-size:9px;letter-spacing:0.7px;">45</div>
<div style="left:1217.4px;top:93.5px;width:1px;height:6.5px;background:#8499a0;"></div>
<div style="left:1217.4px;top:93.5px;width:2.5px;height:1px;background:#8499a0;"></div>
<div class="t" style="left:1222.4px;top:86.8px;height:14px;line-height:14px;font-size:9px;letter-spacing:0.7px;">49</div>
<div style="left:1280.1px;top:93.5px;width:1px;height:6.5px;background:#8499a0;"></div>
<div style="left:1280.1px;top:93.5px;width:2.5px;height:1px;background:#8499a0;"></div>
<div class="t" style="left:1285.1px;top:86.8px;height:14px;line-height:14px;font-size:9px;letter-spacing:0.7px;">53</div>
<div style="left:1342.8px;top:93.5px;width:1px;height:6.5px;background:#8499a0;"></div>
<div style="left:1342.8px;top:93.5px;width:2.5px;height:1px;background:#8499a0;"></div>
<div class="t" style="left:1347.8px;top:86.8px;height:14px;line-height:14px;font-size:9px;letter-spacing:0.7px;">57</div>
<div style="left:1405.6px;top:93.5px;width:1px;height:6.5px;background:#8499a0;"></div>
<div style="left:1405.6px;top:93.5px;width:2.5px;height:1px;background:#8499a0;"></div>
<div class="t" style="left:1410.6px;top:86.8px;height:14px;line-height:14px;font-size:9px;letter-spacing:0.7px;">61</div>
<div style="left:1468.3px;top:93.5px;width:1px;height:6.5px;background:#8499a0;"></div>
<div style="left:1468.3px;top:93.5px;width:2.5px;height:1px;background:#8499a0;"></div>
<div class="t" style="left:1473.3px;top:86.8px;height:14px;line-height:14px;font-size:9px;letter-spacing:0.7px;">65</div>
<div style="left:1531.0px;top:93.5px;width:1px;height:6.5px;background:#8499a0;"></div>
<div style="left:1531.0px;top:93.5px;width:2.5px;height:1px;background:#8499a0;"></div>
<div class="t" style="left:1536.0px;top:86.8px;height:14px;line-height:14px;font-size:9px;letter-spacing:0.7px;">69</div>
<div style="left:1593.8px;top:93.5px;width:1px;height:6.5px;background:#8499a0;"></div>
<div style="left:1593.8px;top:93.5px;width:2.5px;height:1px;background:#8499a0;"></div>
<div class="t" style="left:1598.8px;top:86.8px;height:14px;line-height:14px;font-size:9px;letter-spacing:0.7px;">73</div>
<div style="left:935.1px;top:98px;width:1px;height:1.5px;background:#6f848a;"></div>
<div style="left:997.8px;top:98px;width:1px;height:1.5px;background:#6f848a;"></div>
<div style="left:1060.6px;top:98px;width:1px;height:1.5px;background:#6f848a;"></div>
<div style="left:1123.3px;top:98px;width:1px;height:1.5px;background:#6f848a;"></div>
<div style="left:1186.0px;top:98px;width:1px;height:1.5px;background:#6f848a;"></div>
<div style="left:1248.8px;top:98px;width:1px;height:1.5px;background:#6f848a;"></div>
<div style="left:1311.5px;top:98px;width:1px;height:1.5px;background:#6f848a;"></div>
<div style="left:1374.2px;top:98px;width:1px;height:1.5px;background:#6f848a;"></div>
<div style="left:1436.9px;top:98px;width:1px;height:1.5px;background:#6f848a;"></div>
<div style="left:1499.7px;top:98px;width:1px;height:1.5px;background:#6f848a;"></div>
<div style="left:1562.4px;top:98px;width:1px;height:1.5px;background:#6f848a;"></div>
<svg style="left:961px;top:117px" width="8" height="6" viewBox="0 0 8 6"><path d="M1 1H6.5V5.5Z" fill="#f0f4f0"/></svg>
<svg style="left:1091px;top:117px" width="8" height="6" viewBox="0 0 8 6"><path d="M1.5 1H7V1L1.5 5.5Z" fill="#f0f4f0"/></svg>
<svg style="left:960px;top:120px" width="140" height="95" viewBox="960 120 140 95"><rect x="966.6" y="124" width="126.0" height="86" fill="#f07fb9"/><rect x="966.6" y="139.7" width="126.0" height="0.8" fill="#b0457f"/><rect x="982.0" y="140.2" width="1.1" height="69.8" fill="#4a1838"/><rect x="997.7" y="140.2" width="1.1" height="69.8" fill="#4a1838"/><rect x="1013.4" y="140.2" width="1.1" height="69.8" fill="#4a1838"/><rect x="1029.1" y="140.2" width="1.1" height="69.8" fill="#4a1838"/><rect x="1044.8" y="140.2" width="1.1" height="69.8" fill="#4a1838"/><rect x="1060.5" y="140.2" width="1.1" height="69.8" fill="#4a1838"/><rect x="1076.1" y="140.2" width="1.1" height="69.8" fill="#4a1838"/><rect x="966.9" y="155.05" width="15.48" height="1.7" fill="#3d0a2e"/><rect x="966.9" y="161.15" width="15.48" height="1.7" fill="#3d0a2e"/><rect x="966.9" y="170.95" width="15.48" height="1.7" fill="#3d0a2e"/><rect x="966.9" y="185.25" width="15.48" height="1.7" fill="#3d0a2e"/><rect x="982.5" y="155.05" width="15.48" height="1.7" fill="#3d0a2e"/><rect x="982.5" y="164.95" width="15.48" height="1.7" fill="#3d0a2e"/><rect x="982.5" y="174.85" width="15.48" height="1.7" fill="#3d0a2e"/><rect x="982.5" y="189.05" width="15.48" height="1.7" fill="#3d0a2e"/><rect x="998.2" y="155.05" width="15.48" height="1.7" fill="#3d0a2e"/><rect x="998.2" y="168.95" width="15.48" height="1.7" fill="#3d0a2e"/><rect x="998.2" y="179.15" width="15.48" height="1.7" fill="#3d0a2e"/><rect x="998.2" y="193.05" width="15.48" height="1.7" fill="#3d0a2e"/><rect x="1013.9" y="161.15" width="15.48" height="1.7" fill="#3d0a2e"/><rect x="1013.9" y="168.95" width="15.48" height="1.7" fill="#3d0a2e"/><rect x="1013.9" y="185.25" width="15.48" height="1.7" fill="#3d0a2e"/><rect x="1013.9" y="198.85" width="15.48" height="1.7" fill="#3d0a2e"/><rect x="1029.6" y="156.95" width="15.48" height="1.7" fill="#3d0a2e"/><rect x="1029.6" y="170.95" width="15.48" height="1.7" fill="#3d0a2e"/><rect x="1029.6" y="180.95" width="15.48" height="1.7" fill="#3d0a2e"/><rect x="1029.6" y="194.95" width="15.48" height="1.7" fill="#3d0a2e"/><rect x="1045.3" y="155.05" width="15.48" height="1.7" fill="#3d0a2e"/><rect x="1045.3" y="170.95" width="15.48" height="1.7" fill="#3d0a2e"/><rect x="1045.3" y="189.05" width="15.48" height="1.7" fill="#3d0a2e"/><rect x="1045.3" y="203.15" width="15.48" height="1.7" fill="#3d0a2e"/><rect x="1061.0" y="161.15" width="15.48" height="1.7" fill="#3d0a2e"/><rect x="1061.0" y="170.95" width="15.48" height="1.7" fill="#3d0a2e"/><rect x="1061.0" y="179.15" width="15.48" height="1.7" fill="#3d0a2e"/><rect x="1061.0" y="194.95" width="15.48" height="1.7" fill="#3d0a2e"/><rect x="1076.6" y="146.75" width="15.48" height="1.7" fill="#3d0a2e"/><rect x="1076.6" y="161.15" width="15.48" height="1.7" fill="#3d0a2e"/><rect x="1076.6" y="170.95" width="15.48" height="1.7" fill="#3d0a2e"/><rect x="1076.6" y="185.25" width="15.48" height="1.7" fill="#3d0a2e"/></svg>
<div class="t" style="left:969.8px;top:125.1px;height:14px;line-height:14px;font-size:10.5px;color:#5c1440;font-weight:normal;letter-spacing:0.3px">Track 1</div>
<div style="left:464px;top:752px;width:1156.5px;height:22px;background:#2f4650;"></div>
<div style="left:464.6px;top:753.5px;width:1px;height:7.5px;background:#9fb0b3;"></div>
<div style="left:464.6px;top:760px;width:2.5px;height:1px;background:#9fb0b3;"></div>
<div class="t" style="left:467.9px;top:753.7px;height:14px;line-height:14px;font-size:9px;letter-spacing:0.7px;">0:00</div>
<div style="left:543.0px;top:753.5px;width:1px;height:7.5px;background:#9fb0b3;"></div>
<div style="left:543.0px;top:760px;width:2.5px;height:1px;background:#9fb0b3;"></div>
<div class="t" style="left:546.3px;top:753.7px;height:14px;line-height:14px;font-size:9px;letter-spacing:0.7px;">0:10</div>
<div style="left:621.4px;top:753.5px;width:1px;height:7.5px;background:#9fb0b3;"></div>
<div style="left:621.4px;top:760px;width:2.5px;height:1px;background:#9fb0b3;"></div>
<div class="t" style="left:624.7px;top:753.7px;height:14px;line-height:14px;font-size:9px;letter-spacing:0.7px;">0:20</div>
<div style="left:699.8px;top:753.5px;width:1px;height:7.5px;background:#9fb0b3;"></div>
<div style="left:699.8px;top:760px;width:2.5px;height:1px;background:#9fb0b3;"></div>
<div class="t" style="left:703.1px;top:753.7px;height:14px;line-height:14px;font-size:9px;letter-spacing:0.7px;">0:30</div>
<div style="left:778.3px;top:753.5px;width:1px;height:7.5px;background:#9fb0b3;"></div>
<div style="left:778.3px;top:760px;width:2.5px;height:1px;background:#9fb0b3;"></div>
<div class="t" style="left:781.6px;top:753.7px;height:14px;line-height:14px;font-size:9px;letter-spacing:0.7px;">0:40</div>
<div style="left:856.7px;top:753.5px;width:1px;height:7.5px;background:#9fb0b3;"></div>
<div style="left:856.7px;top:760px;width:2.5px;height:1px;background:#9fb0b3;"></div>
<div class="t" style="left:860.0px;top:753.7px;height:14px;line-height:14px;font-size:9px;letter-spacing:0.7px;">0:50</div>
<div style="left:935.1px;top:753.5px;width:1px;height:7.5px;background:#9fb0b3;"></div>
<div style="left:935.1px;top:760px;width:2.5px;height:1px;background:#9fb0b3;"></div>
<div class="t" style="left:938.4px;top:753.7px;height:14px;line-height:14px;font-size:9px;letter-spacing:0.7px;">1:00</div>
<div style="left:1013.5px;top:753.5px;width:1px;height:7.5px;background:#9fb0b3;"></div>
<div style="left:1013.5px;top:760px;width:2.5px;height:1px;background:#9fb0b3;"></div>
<div class="t" style="left:1016.8px;top:753.7px;height:14px;line-height:14px;font-size:9px;letter-spacing:0.7px;">1:10</div>
<div style="left:1091.9px;top:753.5px;width:1px;height:7.5px;background:#9fb0b3;"></div>
<div style="left:1091.9px;top:760px;width:2.5px;height:1px;background:#9fb0b3;"></div>
<div class="t" style="left:1095.2px;top:753.7px;height:14px;line-height:14px;font-size:9px;letter-spacing:0.7px;">1:20</div>
<div style="left:1170.3px;top:753.5px;width:1px;height:7.5px;background:#9fb0b3;"></div>
<div style="left:1170.3px;top:760px;width:2.5px;height:1px;background:#9fb0b3;"></div>
<div class="t" style="left:1173.6px;top:753.7px;height:14px;line-height:14px;font-size:9px;letter-spacing:0.7px;">1:30</div>
<div style="left:1248.8px;top:753.5px;width:1px;height:7.5px;background:#9fb0b3;"></div>
<div style="left:1248.8px;top:760px;width:2.5px;height:1px;background:#9fb0b3;"></div>
<div class="t" style="left:1252.0px;top:753.7px;height:14px;line-height:14px;font-size:9px;letter-spacing:0.7px;">1:40</div>
<div style="left:1327.2px;top:753.5px;width:1px;height:7.5px;background:#9fb0b3;"></div>
<div style="left:1327.2px;top:760px;width:2.5px;height:1px;background:#9fb0b3;"></div>
<div class="t" style="left:1330.5px;top:753.7px;height:14px;line-height:14px;font-size:9px;letter-spacing:0.7px;">1:50</div>
<div style="left:1405.6px;top:753.5px;width:1px;height:7.5px;background:#9fb0b3;"></div>
<div style="left:1405.6px;top:760px;width:2.5px;height:1px;background:#9fb0b3;"></div>
<div class="t" style="left:1408.9px;top:753.7px;height:14px;line-height:14px;font-size:9px;letter-spacing:0.7px;">2:00</div>
<div style="left:1484.0px;top:753.5px;width:1px;height:7.5px;background:#9fb0b3;"></div>
<div style="left:1484.0px;top:760px;width:2.5px;height:1px;background:#9fb0b3;"></div>
<div class="t" style="left:1487.3px;top:753.7px;height:14px;line-height:14px;font-size:9px;letter-spacing:0.7px;">2:10</div>
<div style="left:1562.4px;top:753.5px;width:1px;height:7.5px;background:#9fb0b3;"></div>
<div style="left:1562.4px;top:760px;width:2.5px;height:1px;background:#9fb0b3;"></div>
<div class="t" style="left:1565.7px;top:753.7px;height:14px;line-height:14px;font-size:9px;letter-spacing:0.7px;">2:20</div>
<div style="left:480.3px;top:752px;width:1px;height:1.5px;background:#8fa0a4;"></div>
<div style="left:496.0px;top:752px;width:1px;height:1.5px;background:#8fa0a4;"></div>
<div style="left:511.6px;top:752px;width:1px;height:1.5px;background:#8fa0a4;"></div>
<div style="left:527.3px;top:752px;width:1px;height:1.5px;background:#8fa0a4;"></div>
<div style="left:558.7px;top:752px;width:1px;height:1.5px;background:#8fa0a4;"></div>
<div style="left:574.4px;top:752px;width:1px;height:1.5px;background:#8fa0a4;"></div>
<div style="left:590.1px;top:752px;width:1px;height:1.5px;background:#8fa0a4;"></div>
<div style="left:605.7px;top:752px;width:1px;height:1.5px;background:#8fa0a4;"></div>
<div style="left:637.1px;top:752px;width:1px;height:1.5px;background:#8fa0a4;"></div>
<div style="left:652.8px;top:752px;width:1px;height:1.5px;background:#8fa0a4;"></div>
<div style="left:668.5px;top:752px;width:1px;height:1.5px;background:#8fa0a4;"></div>
<div style="left:684.2px;top:752px;width:1px;height:1.5px;background:#8fa0a4;"></div>
<div style="left:715.5px;top:752px;width:1px;height:1.5px;background:#8fa0a4;"></div>
<div style="left:731.2px;top:752px;width:1px;height:1.5px;background:#8fa0a4;"></div>
<div style="left:746.9px;top:752px;width:1px;height:1.5px;background:#8fa0a4;"></div>
<div style="left:762.6px;top:752px;width:1px;height:1.5px;background:#8fa0a4;"></div>
<div style="left:793.9px;top:752px;width:1px;height:1.5px;background:#8fa0a4;"></div>
<div style="left:809.6px;top:752px;width:1px;height:1.5px;background:#8fa0a4;"></div>
<div style="left:825.3px;top:752px;width:1px;height:1.5px;background:#8fa0a4;"></div>
<div style="left:841.0px;top:752px;width:1px;height:1.5px;background:#8fa0a4;"></div>
<div style="left:872.4px;top:752px;width:1px;height:1.5px;background:#8fa0a4;"></div>
<div style="left:888.0px;top:752px;width:1px;height:1.5px;background:#8fa0a4;"></div>
<div style="left:903.7px;top:752px;width:1px;height:1.5px;background:#8fa0a4;"></div>
<div style="left:919.4px;top:752px;width:1px;height:1.5px;background:#8fa0a4;"></div>
<div style="left:950.8px;top:752px;width:1px;height:1.5px;background:#8fa0a4;"></div>
<div style="left:966.5px;top:752px;width:1px;height:1.5px;background:#8fa0a4;"></div>
<div style="left:982.1px;top:752px;width:1px;height:1.5px;background:#8fa0a4;"></div>
<div style="left:997.8px;top:752px;width:1px;height:1.5px;background:#8fa0a4;"></div>
<div style="left:1029.2px;top:752px;width:1px;height:1.5px;background:#8fa0a4;"></div>
<div style="left:1044.9px;top:752px;width:1px;height:1.5px;background:#8fa0a4;"></div>
<div style="left:1060.6px;top:752px;width:1px;height:1.5px;background:#8fa0a4;"></div>
<div style="left:1076.2px;top:752px;width:1px;height:1.5px;background:#8fa0a4;"></div>
<div style="left:1107.6px;top:752px;width:1px;height:1.5px;background:#8fa0a4;"></div>
<div style="left:1123.3px;top:752px;width:1px;height:1.5px;background:#8fa0a4;"></div>
<div style="left:1139.0px;top:752px;width:1px;height:1.5px;background:#8fa0a4;"></div>
<div style="left:1154.7px;top:752px;width:1px;height:1.5px;background:#8fa0a4;"></div>
<div style="left:1186.0px;top:752px;width:1px;height:1.5px;background:#8fa0a4;"></div>
<div style="left:1201.7px;top:752px;width:1px;height:1.5px;background:#8fa0a4;"></div>
<div style="left:1217.4px;top:752px;width:1px;height:1.5px;background:#8fa0a4;"></div>
<div style="left:1233.1px;top:752px;width:1px;height:1.5px;background:#8fa0a4;"></div>
<div style="left:1264.4px;top:752px;width:1px;height:1.5px;background:#8fa0a4;"></div>
<div style="left:1280.1px;top:752px;width:1px;height:1.5px;background:#8fa0a4;"></div>
<div style="left:1295.8px;top:752px;width:1px;height:1.5px;background:#8fa0a4;"></div>
<div style="left:1311.5px;top:752px;width:1px;height:1.5px;background:#8fa0a4;"></div>
<div style="left:1342.8px;top:752px;width:1px;height:1.5px;background:#8fa0a4;"></div>
<div style="left:1358.5px;top:752px;width:1px;height:1.5px;background:#8fa0a4;"></div>
<div style="left:1374.2px;top:752px;width:1px;height:1.5px;background:#8fa0a4;"></div>
<div style="left:1389.9px;top:752px;width:1px;height:1.5px;background:#8fa0a4;"></div>
<div style="left:1421.3px;top:752px;width:1px;height:1.5px;background:#8fa0a4;"></div>
<div style="left:1436.9px;top:752px;width:1px;height:1.5px;background:#8fa0a4;"></div>
<div style="left:1452.6px;top:752px;width:1px;height:1.5px;background:#8fa0a4;"></div>
<div style="left:1468.3px;top:752px;width:1px;height:1.5px;background:#8fa0a4;"></div>
<div style="left:1499.7px;top:752px;width:1px;height:1.5px;background:#8fa0a4;"></div>
<div style="left:1515.4px;top:752px;width:1px;height:1.5px;background:#8fa0a4;"></div>
<div style="left:1531.0px;top:752px;width:1px;height:1.5px;background:#8fa0a4;"></div>
<div style="left:1546.7px;top:752px;width:1px;height:1.5px;background:#8fa0a4;"></div>
<div style="left:1578.1px;top:752px;width:1px;height:1.5px;background:#8fa0a4;"></div>
<div style="left:1593.8px;top:752px;width:1px;height:1.5px;background:#8fa0a4;"></div>
<div style="left:1609.5px;top:752px;width:1px;height:1.5px;background:#8fa0a4;"></div>
<svg style="left:961px;top:753.5px" width="8" height="6" viewBox="0 0 8 6"><path d="M6.5 0.5V5.5H1Z" fill="#f0f4f0"/></svg>
<svg style="left:1091px;top:753.5px" width="8" height="6" viewBox="0 0 8 6"><path d="M1.5 0.5V5.5H7Z" fill="#f0f4f0"/></svg>
<div class="t" style="left:1589.3px;top:732.5px;height:20px;line-height:20px;font-size:15.5px;color:#8b9ca0;letter-spacing:1.4px">1/1</div>
<div style="left:1620.5px;top:100px;width:290.5px;height:674px;background:#2f4650;"></div>
<div style="left:1620.6px;top:124px;width:93.6px;height:86.5px;background:#ef85be;"></div>
<svg style="left:1624px;top:126px" width="13" height="13" viewBox="0 0 13 13"><circle cx="6.5" cy="6.5" r="5.6" fill="none" stroke="#7a1450" stroke-width="1.250"/><path d="M3.6 5L9.4 5L6.5 9.2Z" fill="#7a1450"/></svg>
<div class="t" style="left:1644.3px;top:126.5px;height:14px;line-height:14px;font-size:10px;color:#7a1450;letter-spacing:0.150px;">1 Grand Pian</div>
<div style="left:1716px;top:124px;width:196px;height:87.0px;overflow:hidden;"><div style="left:3.5px;top:2.2px;width:68.5px;height:12px;background:#1e333b;"><div class="t" style="left:2px;top:0.5px;height:12px;line-height:12px;font-size:10px;width:56.0px;overflow:hidden">All Ins</div><svg style="left:58.7px;top:3.2px" width="7" height="5.5" viewBox="0 0 7 5.5"><path d="M0 0H7L3.5 5.5Z" fill="#e6e8e0"/></svg></div><div style="left:3.5px;top:19.2px;width:68.5px;height:12px;background:#1e333b;"><div class="t" style="left:9px;top:0.5px;height:12px;line-height:12px;font-size:10px;width:49.0px;overflow:hidden">All Channe</div><svg style="left:58.7px;top:3.2px" width="7" height="5.5" viewBox="0 0 7 5.5"><path d="M0 0H7L3.5 5.5Z" fill="#e6e8e0"/></svg></div><div style="left:3.5px;top:36.2px;width:15.3px;height:12px;background:#1e333b;"><div class="t" style="left:0;top:0.5px;width:15.3px;height:12px;line-height:12px;text-align:center;font-size:10px;color:#e6e8e0;">In</div></div><div style="left:22.2px;top:36.2px;width:26.3px;height:12px;background:#fcc56c;"><div class="t" style="left:0;top:0.5px;width:26.3px;height:12px;line-height:12px;text-align:center;font-size:10px;color:#33240a;">Auto</div></div><div style="left:52.2px;top:36.2px;width:19.8px;height:12px;background:#1e333b;"><div class="t" style="left:0;top:0.5px;width:19.8px;height:12px;line-height:12px;text-align:center;font-size:10px;color:#e6e8e0;">Off</div></div><div style="left:3.5px;top:53.2px;width:68.5px;height:12px;background:#1e333b;"><div class="t" style="left:2px;top:0.5px;height:12px;line-height:12px;font-size:10px;width:56.0px;overflow:hidden">Main</div><svg style="left:58.7px;top:3.2px" width="7" height="5.5" viewBox="0 0 7 5.5"><path d="M0 0H7L3.5 5.5Z" fill="#e6e8e0"/></svg></div><div style="left:3.5px;top:70px;width:68.5px;height:12px;background:#304851;border:1px solid #1e333b;"></div><div style="left:78.20000000000005px;top:2.2px;width:45.3px;height:12px;background:#fcc56c;"><div class="t" style="left:0;top:0.5px;width:45.3px;height:12px;line-height:12px;text-align:center;font-size:10px;color:#2a2008;">1</div></div><div style="left:128.20000000000005px;top:2.2px;width:20.3px;height:12px;background:#1e333b;"><div class="t" style="left:0;top:0.5px;width:20.3px;height:12px;line-height:12px;text-align:center;font-size:10px;color:#e6e8e0;">S</div></div><div style="left:153.20000000000005px;top:2.2px;width:20.5px;height:12px;background:#1e333b;"><svg style="left:5.5px;top:1.5px" width="9" height="9" viewBox="0 0 9 9"><circle cx="4.5" cy="4.5" r="3.8" fill="#e6e8e0"/><path d="M4.5 4.5V1.8M4.5 4.5L2.8 6" stroke="#1e333b" stroke-width="1.1" fill="none"/></svg></div><div style="left:78.20000000000005px;top:19.2px;width:45.5px;height:12px;background:#1e333b;"><div style="left:0px;top:0px;width:38px;height:12px;background:#1e9886;"></div><div class="t" style="left:0;top:0.5px;width:45.5px;height:12px;line-height:12px;text-align:center;font-size:10px">0</div></div><div style="left:128.20000000000005px;top:19.2px;width:45.5px;height:12px;background:#1e333b;"><div class="t" style="left:0;top:0.5px;width:45.5px;height:12px;line-height:12px;text-align:center;font-size:10px;color:#e6e8e0;">C</div></div><div style="left:78.20000000000005px;top:36.2px;width:29.4px;height:12px;background:#1e333b;"><div class="t" style="left:0;top:0.5px;width:29.4px;height:12px;line-height:12px;text-align:center;font-size:12.5px;color:#e6e8e0;letter-spacing:0.3px;font-weight:normal;line-height:11px;">−∞</div></div><div style="left:111.00000000000004px;top:36.2px;width:29.7px;height:12px;background:#1e333b;"><div class="t" style="left:0;top:0.5px;width:29.7px;height:12px;line-height:12px;text-align:center;font-size:12.5px;color:#e6e8e0;letter-spacing:0.3px;font-weight:normal;line-height:11px;">−∞</div></div><div style="left:177.70000000000005px;top:2px;width:3.1px;height:83.5px;background:#1b2e36;"></div><div style="left:181.9000000000001px;top:2px;width:3.1px;height:83.5px;background:#1b2e36;"></div></div>
<div style="left:1620.6px;top:212px;width:93.6px;height:86.5px;background:#ef85be;"></div>
<svg style="left:1624px;top:214px" width="13" height="13" viewBox="0 0 13 13"><circle cx="6.5" cy="6.5" r="5.6" fill="none" stroke="#7a1450" stroke-width="1.250"/><path d="M3.6 5L9.4 5L6.5 9.2Z" fill="#7a1450"/></svg>
<div class="t" style="left:1644.3px;top:214.5px;height:14px;line-height:14px;font-size:10px;color:#7a1450;letter-spacing:0.150px;">2 Grand Pian</div>
<div style="left:1716px;top:212px;width:196px;height:87.0px;overflow:hidden;"><div style="left:3.5px;top:2.2px;width:68.5px;height:12px;background:#1e333b;"><div class="t" style="left:2px;top:0.5px;height:12px;line-height:12px;font-size:10px;width:56.0px;overflow:hidden">All Ins</div><svg style="left:58.7px;top:3.2px" width="7" height="5.5" viewBox="0 0 7 5.5"><path d="M0 0H7L3.5 5.5Z" fill="#e6e8e0"/></svg></div><div style="left:3.5px;top:19.2px;width:68.5px;height:12px;background:#1e333b;"><div class="t" style="left:9px;top:0.5px;height:12px;line-height:12px;font-size:10px;width:49.0px;overflow:hidden">All Channe</div><svg style="left:58.7px;top:3.2px" width="7" height="5.5" viewBox="0 0 7 5.5"><path d="M0 0H7L3.5 5.5Z" fill="#e6e8e0"/></svg></div><div style="left:3.5px;top:36.2px;width:15.3px;height:12px;background:#1e333b;"><div class="t" style="left:0;top:0.5px;width:15.3px;height:12px;line-height:12px;text-align:center;font-size:10px;color:#e6e8e0;">In</div></div><div style="left:22.2px;top:36.2px;width:26.3px;height:12px;background:#fcc56c;"><div class="t" style="left:0;top:0.5px;width:26.3px;height:12px;line-height:12px;text-align:center;font-size:10px;color:#33240a;">Auto</div></div><div style="left:52.2px;top:36.2px;width:19.8px;height:12px;background:#1e333b;"><div class="t" style="left:0;top:0.5px;width:19.8px;height:12px;line-height:12px;text-align:center;font-size:10px;color:#e6e8e0;">Off</div></div><div style="left:3.5px;top:53.2px;width:68.5px;height:12px;background:#1e333b;"><div class="t" style="left:2px;top:0.5px;height:12px;line-height:12px;font-size:10px;width:56.0px;overflow:hidden">Main</div><svg style="left:58.7px;top:3.2px" width="7" height="5.5" viewBox="0 0 7 5.5"><path d="M0 0H7L3.5 5.5Z" fill="#e6e8e0"/></svg></div><div style="left:3.5px;top:70px;width:68.5px;height:12px;background:#304851;border:1px solid #1e333b;"></div><div style="left:78.20000000000005px;top:2.2px;width:45.3px;height:12px;background:#fcc56c;"><div class="t" style="left:0;top:0.5px;width:45.3px;height:12px;line-height:12px;text-align:center;font-size:10px;color:#2a2008;">2</div></div><div style="left:128.20000000000005px;top:2.2px;width:20.3px;height:12px;background:#1e333b;"><div class="t" style="left:0;top:0.5px;width:20.3px;height:12px;line-height:12px;text-align:center;font-size:10px;color:#e6e8e0;">S</div></div><div style="left:153.20000000000005px;top:2.2px;width:20.5px;height:12px;background:#1e333b;"><svg style="left:5.5px;top:1.5px" width="9" height="9" viewBox="0 0 9 9"><circle cx="4.5" cy="4.5" r="3.8" fill="#e6e8e0"/><path d="M4.5 4.5V1.8M4.5 4.5L2.8 6" stroke="#1e333b" stroke-width="1.1" fill="none"/></svg></div><div style="left:78.20000000000005px;top:19.2px;width:45.5px;height:12px;background:#1e333b;"><div style="left:0px;top:0px;width:38px;height:12px;background:#1e9886;"></div><div class="t" style="left:0;top:0.5px;width:45.5px;height:12px;line-height:12px;text-align:center;font-size:10px">0</div></div><div style="left:128.20000000000005px;top:19.2px;width:45.5px;height:12px;background:#1e333b;"><div class="t" style="left:0;top:0.5px;width:45.5px;height:12px;line-height:12px;text-align:center;font-size:10px;color:#e6e8e0;">C</div></div><div style="left:78.20000000000005px;top:36.2px;width:29.4px;height:12px;background:#1e333b;"><div class="t" style="left:0;top:0.5px;width:29.4px;height:12px;line-height:12px;text-align:center;font-size:12.5px;color:#e6e8e0;letter-spacing:0.3px;font-weight:normal;line-height:11px;">−∞</div></div><div style="left:111.00000000000004px;top:36.2px;width:29.7px;height:12px;background:#1e333b;"><div class="t" style="left:0;top:0.5px;width:29.7px;height:12px;line-height:12px;text-align:center;font-size:12.5px;color:#e6e8e0;letter-spacing:0.3px;font-weight:normal;line-height:11px;">−∞</div></div><div style="left:177.70000000000005px;top:2px;width:3.1px;height:83.5px;background:#1b2e36;"></div><div style="left:181.9000000000001px;top:2px;width:3.1px;height:83.5px;background:#1b2e36;"></div></div>
<div style="left:1620.6px;top:300px;width:93.6px;height:86.5px;background:#ef85be;"></div>
<svg style="left:1624px;top:302px" width="13" height="13" viewBox="0 0 13 13"><circle cx="6.5" cy="6.5" r="5.6" fill="none" stroke="#7a1450" stroke-width="1.250"/><path d="M3.6 5L9.4 5L6.5 9.2Z" fill="#7a1450"/></svg>
<div class="t" style="left:1644.3px;top:302.5px;height:14px;line-height:14px;font-size:10px;color:#7a1450;letter-spacing:0.150px;">3 Grand Pian</div>
<div style="left:1716px;top:300px;width:196px;height:87.0px;overflow:hidden;"><div style="left:3.5px;top:2.2px;width:68.5px;height:12px;background:#1e333b;"><div class="t" style="left:2px;top:0.5px;height:12px;line-height:12px;font-size:10px;width:56.0px;overflow:hidden">All Ins</div><svg style="left:58.7px;top:3.2px" width="7" height="5.5" viewBox="0 0 7 5.5"><path d="M0 0H7L3.5 5.5Z" fill="#e6e8e0"/></svg></div><div style="left:3.5px;top:19.2px;width:68.5px;height:12px;background:#1e333b;"><div class="t" style="left:9px;top:0.5px;height:12px;line-height:12px;font-size:10px;width:49.0px;overflow:hidden">All Channe</div><svg style="left:58.7px;top:3.2px" width="7" height="5.5" viewBox="0 0 7 5.5"><path d="M0 0H7L3.5 5.5Z" fill="#e6e8e0"/></svg></div><div style="left:3.5px;top:36.2px;width:15.3px;height:12px;background:#1e333b;"><div class="t" style="left:0;top:0.5px;width:15.3px;height:12px;line-height:12px;text-align:center;font-size:10px;color:#e6e8e0;">In</div></div><div style="left:22.2px;top:36.2px;width:26.3px;height:12px;background:#fcc56c;"><div class="t" style="left:0;top:0.5px;width:26.3px;height:12px;line-height:12px;text-align:center;font-size:10px;color:#33240a;">Auto</div></div><div style="left:52.2px;top:36.2px;width:19.8px;height:12px;background:#1e333b;"><div class="t" style="left:0;top:0.5px;width:19.8px;height:12px;line-height:12px;text-align:center;font-size:10px;color:#e6e8e0;">Off</div></div><div style="left:3.5px;top:53.2px;width:68.5px;height:12px;background:#1e333b;"><div class="t" style="left:2px;top:0.5px;height:12px;line-height:12px;font-size:10px;width:56.0px;overflow:hidden">Main</div><svg style="left:58.7px;top:3.2px" width="7" height="5.5" viewBox="0 0 7 5.5"><path d="M0 0H7L3.5 5.5Z" fill="#e6e8e0"/></svg></div><div style="left:3.5px;top:70px;width:68.5px;height:12px;background:#304851;border:1px solid #1e333b;"></div><div style="left:78.20000000000005px;top:2.2px;width:45.3px;height:12px;background:#fcc56c;"><div class="t" style="left:0;top:0.5px;width:45.3px;height:12px;line-height:12px;text-align:center;font-size:10px;color:#2a2008;">3</div></div><div style="left:128.20000000000005px;top:2.2px;width:20.3px;height:12px;background:#1e333b;"><div class="t" style="left:0;top:0.5px;width:20.3px;height:12px;line-height:12px;text-align:center;font-size:10px;color:#e6e8e0;">S</div></div><div style="left:153.20000000000005px;top:2.2px;width:20.5px;height:12px;background:#1e333b;"><svg style="left:5.5px;top:1.5px" width="9" height="9" viewBox="0 0 9 9"><circle cx="4.5" cy="4.5" r="3.8" fill="#e6e8e0"/><path d="M4.5 4.5V1.8M4.5 4.5L2.8 6" stroke="#1e333b" stroke-width="1.1" fill="none"/></svg></div><div style="left:78.20000000000005px;top:19.2px;width:45.5px;height:12px;background:#1e333b;"><div style="left:0px;top:0px;width:38px;height:12px;background:#1e9886;"></div><div class="t" style="left:0;top:0.5px;width:45.5px;height:12px;line-height:12px;text-align:center;font-size:10px">0</div></div><div style="left:128.20000000000005px;top:19.2px;width:45.5px;height:12px;background:#1e333b;"><div class="t" style="left:0;top:0.5px;width:45.5px;height:12px;line-height:12px;text-align:center;font-size:10px;color:#e6e8e0;">C</div></div><div style="left:78.20000000000005px;top:36.2px;width:29.4px;height:12px;background:#1e333b;"><div class="t" style="left:0;top:0.5px;width:29.4px;height:12px;line-height:12px;text-align:center;font-size:12.5px;color:#e6e8e0;letter-spacing:0.3px;font-weight:normal;line-height:11px;">−∞</div></div><div style="left:111.00000000000004px;top:36.2px;width:29.7px;height:12px;background:#1e333b;"><div class="t" style="left:0;top:0.5px;width:29.7px;height:12px;line-height:12px;text-align:center;font-size:12.5px;color:#e6e8e0;letter-spacing:0.3px;font-weight:normal;line-height:11px;">−∞</div></div><div style="left:177.70000000000005px;top:2px;width:3.1px;height:83.5px;background:#1b2e36;"></div><div style="left:181.9000000000001px;top:2px;width:3.1px;height:83.5px;background:#1b2e36;"></div></div>
<div style="left:1620.6px;top:388px;width:93.6px;height:86.5px;background:#ef85be;"></div>
<svg style="left:1624px;top:390px" width="13" height="13" viewBox="0 0 13 13"><circle cx="6.5" cy="6.5" r="5.6" fill="none" stroke="#7a1450" stroke-width="1.250"/><path d="M3.6 5L9.4 5L6.5 9.2Z" fill="#7a1450"/></svg>
<div class="t" style="left:1644.3px;top:390.5px;height:14px;line-height:14px;font-size:10px;color:#7a1450;letter-spacing:0.150px;">4 Grand Pian</div>
<div style="left:1716px;top:388px;width:196px;height:87.0px;overflow:hidden;"><div style="left:3.5px;top:2.2px;width:68.5px;height:12px;background:#1e333b;"><div class="t" style="left:2px;top:0.5px;height:12px;line-height:12px;font-size:10px;width:56.0px;overflow:hidden">All Ins</div><svg style="left:58.7px;top:3.2px" width="7" height="5.5" viewBox="0 0 7 5.5"><path d="M0 0H7L3.5 5.5Z" fill="#e6e8e0"/></svg></div><div style="left:3.5px;top:19.2px;width:68.5px;height:12px;background:#1e333b;"><div class="t" style="left:9px;top:0.5px;height:12px;line-height:12px;font-size:10px;width:49.0px;overflow:hidden">All Channe</div><svg style="left:58.7px;top:3.2px" width="7" height="5.5" viewBox="0 0 7 5.5"><path d="M0 0H7L3.5 5.5Z" fill="#e6e8e0"/></svg></div><div style="left:3.5px;top:36.2px;width:15.3px;height:12px;background:#1e333b;"><div class="t" style="left:0;top:0.5px;width:15.3px;height:12px;line-height:12px;text-align:center;font-size:10px;color:#e6e8e0;">In</div></div><div style="left:22.2px;top:36.2px;width:26.3px;height:12px;background:#fcc56c;"><div class="t" style="left:0;top:0.5px;width:26.3px;height:12px;line-height:12px;text-align:center;font-size:10px;color:#33240a;">Auto</div></div><div style="left:52.2px;top:36.2px;width:19.8px;height:12px;background:#1e333b;"><div class="t" style="left:0;top:0.5px;width:19.8px;height:12px;line-height:12px;text-align:center;font-size:10px;color:#e6e8e0;">Off</div></div><div style="left:3.5px;top:53.2px;width:68.5px;height:12px;background:#1e333b;"><div class="t" style="left:2px;top:0.5px;height:12px;line-height:12px;font-size:10px;width:56.0px;overflow:hidden">Main</div><svg style="left:58.7px;top:3.2px" width="7" height="5.5" viewBox="0 0 7 5.5"><path d="M0 0H7L3.5 5.5Z" fill="#e6e8e0"/></svg></div><div style="left:3.5px;top:70px;width:68.5px;height:12px;background:#304851;border:1px solid #1e333b;"></div><div style="left:78.20000000000005px;top:2.2px;width:45.3px;height:12px;background:#fcc56c;"><div class="t" style="left:0;top:0.5px;width:45.3px;height:12px;line-height:12px;text-align:center;font-size:10px;color:#2a2008;">4</div></div><div style="left:128.20000000000005px;top:2.2px;width:20.3px;height:12px;background:#1e333b;"><div class="t" style="left:0;top:0.5px;width:20.3px;height:12px;line-height:12px;text-align:center;font-size:10px;color:#e6e8e0;">S</div></div><div style="left:153.20000000000005px;top:2.2px;width:20.5px;height:12px;background:#1e333b;"><svg style="left:5.5px;top:1.5px" width="9" height="9" viewBox="0 0 9 9"><circle cx="4.5" cy="4.5" r="3.8" fill="#e6e8e0"/><path d="M4.5 4.5V1.8M4.5 4.5L2.8 6" stroke="#1e333b" stroke-width="1.1" fill="none"/></svg></div><div style="left:78.20000000000005px;top:19.2px;width:45.5px;height:12px;background:#1e333b;"><div style="left:0px;top:0px;width:38px;height:12px;background:#1e9886;"></div><div class="t" style="left:0;top:0.5px;width:45.5px;height:12px;line-height:12px;text-align:center;font-size:10px">0</div></div><div style="left:128.20000000000005px;top:19.2px;width:45.5px;height:12px;background:#1e333b;"><div class="t" style="left:0;top:0.5px;width:45.5px;height:12px;line-height:12px;text-align:center;font-size:10px;color:#e6e8e0;">C</div></div><div style="left:78.20000000000005px;top:36.2px;width:29.4px;height:12px;background:#1e333b;"><div class="t" style="left:0;top:0.5px;width:29.4px;height:12px;line-height:12px;text-align:center;font-size:12.5px;color:#e6e8e0;letter-spacing:0.3px;font-weight:normal;line-height:11px;">−∞</div></div><div style="left:111.00000000000004px;top:36.2px;width:29.7px;height:12px;background:#1e333b;"><div class="t" style="left:0;top:0.5px;width:29.7px;height:12px;line-height:12px;text-align:center;font-size:12.5px;color:#e6e8e0;letter-spacing:0.3px;font-weight:normal;line-height:11px;">−∞</div></div><div style="left:177.70000000000005px;top:2px;width:3.1px;height:83.5px;background:#1b2e36;"></div><div style="left:181.9000000000001px;top:2px;width:3.1px;height:83.5px;background:#1b2e36;"></div></div>
<div style="left:1620.6px;top:476px;width:93.6px;height:86.5px;background:#dff5ea;"></div>
<svg style="left:1624px;top:478px" width="13" height="13" viewBox="0 0 13 13"><circle cx="6.5" cy="6.5" r="5.6" fill="none" stroke="#2a3c42" stroke-width="1.250"/><path d="M3.6 5L9.4 5L6.5 9.2Z" fill="#2a3c42"/></svg>
<div class="t" style="left:1644.3px;top:478.5px;height:14px;line-height:14px;font-size:10px;color:#2a3c42;letter-spacing:0.150px;">5 MIDI Agent</div>
<div style="left:1716px;top:476px;width:196px;height:87.0px;background:#4b6069;overflow:hidden;"><div style="left:3.5px;top:2.2px;width:68.5px;height:12px;background:#1e333b;"><div class="t" style="left:2px;top:0.5px;height:12px;line-height:12px;font-size:10px;width:56.0px;overflow:hidden">All Ins</div><svg style="left:58.7px;top:3.2px" width="7" height="5.5" viewBox="0 0 7 5.5"><path d="M0 0H7L3.5 5.5Z" fill="#e6e8e0"/></svg></div><div style="left:3.5px;top:19.2px;width:68.5px;height:12px;background:#1e333b;"><div class="t" style="left:9px;top:0.5px;height:12px;line-height:12px;font-size:10px;width:49.0px;overflow:hidden">All Channe</div><svg style="left:58.7px;top:3.2px" width="7" height="5.5" viewBox="0 0 7 5.5"><path d="M0 0H7L3.5 5.5Z" fill="#e6e8e0"/></svg></div><div style="left:3.5px;top:36.2px;width:15.3px;height:12px;background:#1e333b;"><div class="t" style="left:0;top:0.5px;width:15.3px;height:12px;line-height:12px;text-align:center;font-size:10px;color:#e6e8e0;">In</div></div><div style="left:22.2px;top:36.2px;width:26.3px;height:12px;background:#fcc56c;"><div class="t" style="left:0;top:0.5px;width:26.3px;height:12px;line-height:12px;text-align:center;font-size:10px;color:#33240a;">Auto</div></div><div style="left:52.2px;top:36.2px;width:19.8px;height:12px;background:#1e333b;"><div class="t" style="left:0;top:0.5px;width:19.8px;height:12px;line-height:12px;text-align:center;font-size:10px;color:#e6e8e0;">Off</div></div><div style="left:3.5px;top:53.2px;width:68.5px;height:12px;background:#1e333b;"><div class="t" style="left:2px;top:0.5px;height:12px;line-height:12px;font-size:10px;width:56.0px;overflow:hidden">Main</div><svg style="left:58.7px;top:3.2px" width="7" height="5.5" viewBox="0 0 7 5.5"><path d="M0 0H7L3.5 5.5Z" fill="#e6e8e0"/></svg></div><div style="left:3.5px;top:70px;width:68.5px;height:12px;background:#304851;border:1px solid #1e333b;"></div><div style="left:78.20000000000005px;top:2.2px;width:45.3px;height:12px;background:#fcc56c;"><div class="t" style="left:0;top:0.5px;width:45.3px;height:12px;line-height:12px;text-align:center;font-size:10px;color:#2a2008;">5</div></div><div style="left:128.20000000000005px;top:2.2px;width:20.3px;height:12px;background:#1e333b;"><div class="t" style="left:0;top:0.5px;width:20.3px;height:12px;line-height:12px;text-align:center;font-size:10px;color:#e6e8e0;">S</div></div><div style="left:153.20000000000005px;top:2.2px;width:20.5px;height:12px;background:#f0626a;"><svg style="left:5.5px;top:1.5px" width="9" height="9" viewBox="0 0 9 9"><circle cx="4.5" cy="4.5" r="3.8" fill="#2a1014"/><path d="M4.5 4.5V1.8M4.5 4.5L2.8 6" stroke="#f0626a" stroke-width="1.1" fill="none"/></svg></div><div style="left:78.20000000000005px;top:19.2px;width:45.5px;height:12px;background:#1e333b;"><div style="left:0px;top:0px;width:38px;height:12px;background:#1e9886;"></div><div class="t" style="left:0;top:0.5px;width:45.5px;height:12px;line-height:12px;text-align:center;font-size:10px">0</div></div><div style="left:128.20000000000005px;top:19.2px;width:45.5px;height:12px;background:#1e333b;"><div class="t" style="left:0;top:0.5px;width:45.5px;height:12px;line-height:12px;text-align:center;font-size:10px;color:#e6e8e0;">C</div></div><div style="left:78.20000000000005px;top:36.2px;width:29.4px;height:12px;background:#1e333b;"><div class="t" style="left:0;top:0.5px;width:29.4px;height:12px;line-height:12px;text-align:center;font-size:12.5px;color:#e6e8e0;letter-spacing:0.3px;font-weight:normal;line-height:11px;">−∞</div></div><div style="left:111.00000000000004px;top:36.2px;width:29.7px;height:12px;background:#1e333b;"><div class="t" style="left:0;top:0.5px;width:29.7px;height:12px;line-height:12px;text-align:center;font-size:12.5px;color:#e6e8e0;letter-spacing:0.3px;font-weight:normal;line-height:11px;">−∞</div></div><div style="left:177.70000000000005px;top:2px;width:3.1px;height:83.5px;background:#1b2e36;"></div><div style="left:181.9000000000001px;top:2px;width:3.1px;height:83.5px;background:#1b2e36;"></div></div>
<div style="left:1620.6px;top:564px;width:93.6px;height:86.5px;background:#f856dc;"></div>
<svg style="left:1624px;top:566px" width="13" height="13" viewBox="0 0 13 13"><circle cx="6.5" cy="6.5" r="5.6" fill="none" stroke="#6a1060" stroke-width="1.250"/><path d="M3.6 5L9.4 5L6.5 9.2Z" fill="#6a1060"/></svg>
<div class="t" style="left:1644.3px;top:566.5px;height:14px;line-height:14px;font-size:10px;color:#6a1060;letter-spacing:0.150px;">6 Audio</div>
<div style="left:1716px;top:564px;width:196px;height:87.0px;overflow:hidden;"><div style="left:3.5px;top:2.2px;width:68.5px;height:12px;background:#1e333b;"><div class="t" style="left:2px;top:0.5px;height:12px;line-height:12px;font-size:10px;width:56.0px;overflow:hidden">Ext. In</div><svg style="left:58.7px;top:3.2px" width="7" height="5.5" viewBox="0 0 7 5.5"><path d="M0 0H7L3.5 5.5Z" fill="#e6e8e0"/></svg></div><div style="left:3.5px;top:19.2px;width:68.5px;height:12px;background:#1e333b;"><div class="t" style="left:9px;top:0.5px;height:12px;line-height:12px;font-size:10px;width:49.0px;overflow:hidden">1</div><svg style="left:58.7px;top:3.2px" width="7" height="5.5" viewBox="0 0 7 5.5"><path d="M0 0H7L3.5 5.5Z" fill="#e6e8e0"/></svg></div><div style="left:4.0px;top:28.0px;width:4.5px;height:1.6px;background:#3ee08a;"></div><div style="left:3.5px;top:36.2px;width:15.3px;height:12px;background:#1e333b;"><div class="t" style="left:0;top:0.5px;width:15.3px;height:12px;line-height:12px;text-align:center;font-size:10px;color:#e6e8e0;">In</div></div><div style="left:22.2px;top:36.2px;width:26.3px;height:12px;background:#1e333b;"><div class="t" style="left:0;top:0.5px;width:26.3px;height:12px;line-height:12px;text-align:center;font-size:10px;color:#e6e8e0;">Auto</div></div><div style="left:52.2px;top:36.2px;width:19.8px;height:12px;background:#fcc56c;"><div class="t" style="left:0;top:0.5px;width:19.8px;height:12px;line-height:12px;text-align:center;font-size:10px;color:#33240a;">Off</div></div><div style="left:3.5px;top:53.2px;width:68.5px;height:12px;background:#1e333b;"><div class="t" style="left:2px;top:0.5px;height:12px;line-height:12px;font-size:10px;width:56.0px;overflow:hidden">Main</div><svg style="left:58.7px;top:3.2px" width="7" height="5.5" viewBox="0 0 7 5.5"><path d="M0 0H7L3.5 5.5Z" fill="#e6e8e0"/></svg></div><div style="left:3.5px;top:70px;width:68.5px;height:12px;background:#304851;border:1px solid #1e333b;"></div><div style="left:78.20000000000005px;top:2.2px;width:45.3px;height:12px;background:#fcc56c;"><div class="t" style="left:0;top:0.5px;width:45.3px;height:12px;line-height:12px;text-align:center;font-size:10px;color:#2a2008;">6</div></div><div style="left:128.20000000000005px;top:2.2px;width:20.3px;height:12px;background:#1e333b;"><div class="t" style="left:0;top:0.5px;width:20.3px;height:12px;line-height:12px;text-align:center;font-size:10px;color:#e6e8e0;">S</div></div><div style="left:153.20000000000005px;top:2.2px;width:20.5px;height:12px;background:#1e333b;"><svg style="left:5.5px;top:1.5px" width="9" height="9" viewBox="0 0 9 9"><circle cx="4.5" cy="4.5" r="3.5" fill="#e6e8e0"/></svg></div><div style="left:78.20000000000005px;top:19.2px;width:45.5px;height:12px;background:#1e333b;"><div style="left:0px;top:0px;width:38px;height:12px;background:#1e9886;"></div><div class="t" style="left:0;top:0.5px;width:45.5px;height:12px;line-height:12px;text-align:center;font-size:10px">0</div></div><div style="left:128.20000000000005px;top:19.2px;width:45.5px;height:12px;background:#1e333b;"><div class="t" style="left:0;top:0.5px;width:45.5px;height:12px;line-height:12px;text-align:center;font-size:10px;color:#e6e8e0;">C</div></div><div style="left:78.20000000000005px;top:36.2px;width:29.4px;height:12px;background:#1e333b;"><div class="t" style="left:0;top:0.5px;width:29.4px;height:12px;line-height:12px;text-align:center;font-size:12.5px;color:#e6e8e0;letter-spacing:0.3px;font-weight:normal;line-height:11px;">−∞</div></div><div style="left:111.00000000000004px;top:36.2px;width:29.7px;height:12px;background:#1e333b;"><div class="t" style="left:0;top:0.5px;width:29.7px;height:12px;line-height:12px;text-align:center;font-size:12.5px;color:#e6e8e0;letter-spacing:0.3px;font-weight:normal;line-height:11px;">−∞</div></div><div style="left:177.70000000000005px;top:2px;width:3.1px;height:83.5px;background:#1b2e36;"></div><div style="left:181.9000000000001px;top:2px;width:3.1px;height:83.5px;background:#1b2e36;"></div></div>
<div style="left:1620.6px;top:652px;width:93.6px;height:41px;background:#ff5c55;"></div>
<svg style="left:1624px;top:654px" width="13" height="13" viewBox="0 0 13 13"><circle cx="6.5" cy="6.5" r="5.6" fill="none" stroke="#7a1010" stroke-width="1.250"/><path d="M3.6 5L9.4 5L6.5 9.2Z" fill="#7a1010"/></svg>
<div class="t" style="left:1644.3px;top:654.5px;height:14px;line-height:14px;font-size:10px;color:#7a1010;letter-spacing:0.150px;">7 Audio</div>
<div style="left:1716px;top:652px;width:196px;height:41.5px;overflow:hidden;"><div style="left:3.5px;top:2.2px;width:68.5px;height:12px;background:#1e333b;"><div class="t" style="left:2px;top:0.5px;height:12px;line-height:12px;font-size:10px;width:56.0px;overflow:hidden">Ext. In</div><svg style="left:58.7px;top:3.2px" width="7" height="5.5" viewBox="0 0 7 5.5"><path d="M0 0H7L3.5 5.5Z" fill="#e6e8e0"/></svg></div><div style="left:3.5px;top:19.2px;width:68.5px;height:12px;background:#1e333b;"><div class="t" style="left:9px;top:0.5px;height:12px;line-height:12px;font-size:10px;width:49.0px;overflow:hidden">2</div><svg style="left:58.7px;top:3.2px" width="7" height="5.5" viewBox="0 0 7 5.5"><path d="M0 0H7L3.5 5.5Z" fill="#e6e8e0"/></svg></div><div style="left:3.5px;top:36.2px;width:15.3px;height:12px;background:#1e333b;"><div class="t" style="left:0;top:0.5px;width:15.3px;height:12px;line-height:12px;text-align:center;font-size:10px;color:#e6e8e0;">In</div></div><div style="left:22.2px;top:36.2px;width:26.3px;height:12px;background:#1e333b;"><div class="t" style="left:0;top:0.5px;width:26.3px;height:12px;line-height:12px;text-align:center;font-size:10px;color:#e6e8e0;">Auto</div></div><div style="left:52.2px;top:36.2px;width:19.8px;height:12px;background:#fcc56c;"><div class="t" style="left:0;top:0.5px;width:19.8px;height:12px;line-height:12px;text-align:center;font-size:10px;color:#33240a;">Off</div></div><div style="left:3.5px;top:53.2px;width:68.5px;height:12px;background:#1e333b;"><div class="t" style="left:2px;top:0.5px;height:12px;line-height:12px;font-size:10px;width:56.0px;overflow:hidden">Main</div><svg style="left:58.7px;top:3.2px" width="7" height="5.5" viewBox="0 0 7 5.5"><path d="M0 0H7L3.5 5.5Z" fill="#e6e8e0"/></svg></div><div style="left:3.5px;top:70px;width:68.5px;height:12px;background:#304851;border:1px solid #1e333b;"></div><div style="left:78.20000000000005px;top:2.2px;width:45.3px;height:12px;background:#fcc56c;"><div class="t" style="left:0;top:0.5px;width:45.3px;height:12px;line-height:12px;text-align:center;font-size:10px;color:#2a2008;">7</div></div><div style="left:128.20000000000005px;top:2.2px;width:20.3px;height:12px;background:#1e333b;"><div class="t" style="left:0;top:0.5px;width:20.3px;height:12px;line-height:12px;text-align:center;font-size:10px;color:#e6e8e0;">S</div></div><div style="left:153.20000000000005px;top:2.2px;width:20.5px;height:12px;background:#1e333b;"><svg style="left:5.5px;top:1.5px" width="9" height="9" viewBox="0 0 9 9"><circle cx="4.5" cy="4.5" r="3.5" fill="#e6e8e0"/></svg></div><div style="left:78.20000000000005px;top:19.2px;width:45.5px;height:12px;background:#1e333b;"><div style="left:0px;top:0px;width:38px;height:12px;background:#1e9886;"></div><div class="t" style="left:0;top:0.5px;width:45.5px;height:12px;line-height:12px;text-align:center;font-size:10px">0</div></div><div style="left:128.20000000000005px;top:19.2px;width:45.5px;height:12px;background:#1e333b;"><div class="t" style="left:0;top:0.5px;width:45.5px;height:12px;line-height:12px;text-align:center;font-size:10px;color:#e6e8e0;">C</div></div><div style="left:78.20000000000005px;top:36.2px;width:29.4px;height:12px;background:#1e333b;"><div class="t" style="left:0;top:0.5px;width:29.4px;height:12px;line-height:12px;text-align:center;font-size:12.5px;color:#e6e8e0;letter-spacing:0.3px;font-weight:normal;line-height:11px;">−∞</div></div><div style="left:111.00000000000004px;top:36.2px;width:29.7px;height:12px;background:#1e333b;"><div class="t" style="left:0;top:0.5px;width:29.7px;height:12px;line-height:12px;text-align:center;font-size:12.5px;color:#e6e8e0;letter-spacing:0.3px;font-weight:normal;line-height:11px;">−∞</div></div><div style="left:177.70000000000005px;top:2px;width:3.1px;height:83.5px;background:#1b2e36;"></div><div style="left:181.9000000000001px;top:2px;width:3.1px;height:83.5px;background:#1b2e36;"></div></div>
<div style="left:1617.5px;top:123px;width:293.5px;height:1.2px;background:#22373f;"></div>
<div style="left:1617.5px;top:211px;width:293.5px;height:1.2px;background:#22373f;"></div>
<div style="left:1617.5px;top:299px;width:293.5px;height:1.2px;background:#22373f;"></div>
<div style="left:1617.5px;top:387px;width:293.5px;height:1.2px;background:#22373f;"></div>
<div style="left:1617.5px;top:475px;width:293.5px;height:1.2px;background:#22373f;"></div>
<div style="left:1617.5px;top:563px;width:293.5px;height:1.2px;background:#22373f;"></div>
<div style="left:1617.5px;top:651px;width:293.5px;height:1.2px;background:#22373f;"></div>
<div style="left:1617.5px;top:694px;width:293.5px;height:1.2px;background:#22373f;"></div>
<div style="left:1617.5px;top:713.5px;width:293.5px;height:1.2px;background:#22373f;"></div>
<div style="left:1617.5px;top:732.5px;width:293.5px;height:1.2px;background:#22373f;"></div>
<div style="left:1617.5px;top:751px;width:293.5px;height:1.2px;background:#22373f;"></div>
<div style="left:1790.5px;top:124px;width:1px;height:627px;background:#22373f;"></div>
<div style="left:1617.5px;top:123px;width:1px;height:629px;background:#22373f;"></div>
<div style="left:1620.6px;top:696px;width:93.6px;height:17px;background:#ffa9ba;"></div>
<svg style="left:1624px;top:698px" width="13" height="13" viewBox="0 0 13 13"><circle cx="6.5" cy="6.5" r="5.6" fill="none" stroke="#6a2030" stroke-width="1.250"/><path d="M5 3.6L9.2 6.5L5 9.4Z" fill="#6a2030"/></svg>
<div class="t" style="left:1644.3px;top:698.1px;height:14px;line-height:14px;font-size:10px;color:#6a2030;word-spacing:1px;letter-spacing:0.150px;">A Reverb</div>
<div style="left:1719.5px;top:699px;width:68.5px;height:12px;background:#304851;border:1px solid #1e333b;"></div>
<div style="left:1794.2px;top:699px;width:45.5px;height:12px;background:#fcc56c;"><div class="t" style="left:0;top:0.5px;width:45.5px;height:12px;line-height:12px;text-align:center;font-size:10px;color:#2a2008;">A</div></div>
<div style="left:1844.2px;top:699px;width:16.5px;height:12px;background:#1e333b;"><div class="t" style="left:0;top:0.5px;width:16.5px;height:12px;line-height:12px;text-align:center;font-size:10px;color:#e6e8e0;">S</div></div>
<div style="left:1865.7px;top:699px;width:24px;height:12px;background:#fcc56c;"><div class="t" style="left:0;top:0.5px;width:24px;height:12px;line-height:12px;text-align:center;font-size:10px;color:#3a2a08;font-weight:normal;">Post</div></div>
<div style="left:1893.7px;top:698px;width:3.1px;height:14px;background:#1b2e36;"></div>
<div style="left:1897.9px;top:698px;width:3.1px;height:14px;background:#1b2e36;"></div>
<div style="left:1620.6px;top:715px;width:93.6px;height:17px;background:#d9a94b;"></div>
<svg style="left:1624px;top:717px" width="13" height="13" viewBox="0 0 13 13"><circle cx="6.5" cy="6.5" r="5.6" fill="none" stroke="#4a3208" stroke-width="1.250"/><path d="M5 3.6L9.2 6.5L5 9.4Z" fill="#4a3208"/></svg>
<div class="t" style="left:1644.3px;top:717.1px;height:14px;line-height:14px;font-size:10px;color:#4a3208;word-spacing:1px;letter-spacing:0.150px;">B Delay</div>
<div style="left:1719.5px;top:718px;width:68.5px;height:12px;background:#304851;border:1px solid #1e333b;"></div>
<div style="left:1794.2px;top:718px;width:45.5px;height:12px;background:#fcc56c;"><div class="t" style="left:0;top:0.5px;width:45.5px;height:12px;line-height:12px;text-align:center;font-size:10px;color:#2a2008;">B</div></div>
<div style="left:1844.2px;top:718px;width:16.5px;height:12px;background:#1e333b;"><div class="t" style="left:0;top:0.5px;width:16.5px;height:12px;line-height:12px;text-align:center;font-size:10px;color:#e6e8e0;">S</div></div>
<div style="left:1865.7px;top:718px;width:24px;height:12px;background:#fcc56c;"><div class="t" style="left:0;top:0.5px;width:24px;height:12px;line-height:12px;text-align:center;font-size:10px;color:#3a2a08;font-weight:normal;">Post</div></div>
<div style="left:1893.7px;top:717px;width:3.1px;height:14px;background:#1b2e36;"></div>
<div style="left:1897.9px;top:717px;width:3.1px;height:14px;background:#1b2e36;"></div>
<div style="left:1620.6px;top:734px;width:93.6px;height:17px;background:#d9b4e3;"></div>
<svg style="left:1624px;top:736px" width="13" height="13" viewBox="0 0 13 13"><circle cx="6.5" cy="6.5" r="5.6" fill="none" stroke="#4a2a5a" stroke-width="1.250"/><path d="M5 3.6L9.2 6.5L5 9.4Z" fill="#4a2a5a"/></svg>
<div class="t" style="left:1646.3px;top:736.1px;height:14px;line-height:14px;font-size:10px;color:#4a2a5a;word-spacing:1px;letter-spacing:0.150px;">Main</div>
<div style="left:1719.5px;top:737px;width:68.5px;height:12px;background:#1e333b;"><div class="t" style="left:9px;top:0.5px;height:12px;line-height:12px;font-size:10px;width:49.0px;overflow:hidden">1/2</div><svg style="left:58.7px;top:3.2px" width="7" height="5.5" viewBox="0 0 7 5.5"><path d="M0 0H7L3.5 5.5Z" fill="#e6e8e0"/></svg></div>
<div style="left:1794.2px;top:737px;width:45.5px;height:12px;background:#1e333b;"><div style="left:0px;top:0px;width:38px;height:12px;background:#1e9886;"></div><div class="t" style="left:0;top:0.5px;width:45.5px;height:12px;line-height:12px;text-align:center;font-size:10px">0</div></div>
<div style="left:1844.2px;top:737px;width:45.5px;height:12px;background:#1e333b;"><div style="left:0px;top:0px;width:32px;height:12px;background:#6d8cd6;"></div><div class="t" style="left:0;top:0;width:45.5px;height:12px;line-height:12px;text-align:center;font-size:10.5px;color:#cfd8f0;font-weight:normal">-6.0</div></div>
<div style="left:1893.7px;top:736px;width:3.1px;height:14px;background:#1b2e36;"></div>
<div style="left:1897.9px;top:736px;width:3.1px;height:14px;background:#1b2e36;"></div>
<div style="left:1623.5px;top:87.3px;width:29.5px;height:12.7px;background:#1b2f37;border-radius:6.5px;"><div class="t" style="left:0;top:0;width:29.5px;height:12.7px;line-height:12.7px;text-align:center;font-size:10.5px">Set</div></div>
<div style="left:1664px;top:87.3px;width:23px;height:12.5px;background:#1b2f37;"><svg style="left:7px;top:2px" width="9" height="8" viewBox="0 0 9 8"><path d="M2.3 6.2L6.7 2.2" stroke="#e6e8e0" stroke-width="1.7"/><circle cx="2.3" cy="6.2" r="1.6" fill="#e6e8e0"/><circle cx="6.7" cy="2.2" r="1.6" fill="#e6e8e0"/></svg></div>
<div style="left:1691.3px;top:87.3px;width:22.4px;height:12.5px;background:#f0927a;border:1px solid #2a1a18;"><svg style="left:5.7px;top:0.8px" width="9" height="9" viewBox="0 0 9 9"><rect x="1" y="4" width="7" height="4.5" fill="#1a1010"/><path d="M2.5 4V3Q2.5 1 4.5 1Q6.5 1 6.5 3V4" fill="none" stroke="#1a1010" stroke-width="1.2"/></svg></div>
<svg style="left:1624.0px;top:105.1px" width="13" height="13" viewBox="0 0 13 13"><circle cx="6.5" cy="6.5" r="6.4" fill="#1b2f37"/><path d="M3 6.5L7.2 3.6V5.9H10.8V7.1H7.2V9.4Z" fill="#e6ecea"/></svg>
<svg style="left:1640.0px;top:105.1px" width="13" height="13" viewBox="0 0 13 13"><circle cx="6.5" cy="6.5" r="6.4" fill="#1b2f37"/><path transform="translate(13,0) scale(-1,1)" d="M3 6.5L7.2 3.6V5.9H10.8V7.1H7.2V9.4Z" fill="#b4c3c3"/></svg>
<div style="left:1621px;top:757.5px;width:15px;height:11.5px;background:#fcc56c;"><svg style="left:2px;top:1.5px" width="11" height="9" viewBox="0 0 11 9"><path d="M1.3 4V5M3.1 2.5V6.5M7.3 2.5V6.5M9.1 3.5V5.5" stroke="#2a1c04" stroke-width="0.9"/><path d="M5.2 0.3V8.7" stroke="#2a1c04" stroke-width="1.6"/></svg></div>
<div style="left:1639.5px;top:757.5px;width:34px;height:11.5px;background:#1e333b;"><div style="left:0px;top:0px;width:14px;height:11.5px;background:linear-gradient(90deg,#1e9886 0,#1e9886 55%,rgba(30,152,134,0) 100%);"></div><div class="t" style="left:0;top:0;width:34px;height:11.5px;line-height:11.5px;text-align:center;font-size:10px">1.00x</div></div>
<div style="left:1680px;top:757.5px;width:15px;height:12px;background:#1e333b;"><div class="t" style="left:0;top:0.5px;width:15px;height:12px;line-height:12px;text-align:center;font-size:10px;color:#e6e8e0;">H</div></div>
<div style="left:1698px;top:757.5px;width:15px;height:12px;background:#1e333b;"><div class="t" style="left:0;top:0.5px;width:15px;height:12px;line-height:12px;text-align:center;font-size:10px;color:#e6e8e0;">W</div></div>
<div style="left:9px;top:783.5px;width:238px;height:187px;background:#2f4650;border-radius:3px 3px 2px 2px;"></div>
<div style="left:9px;top:783.5px;width:238px;height:16.5px;background:#a3b7ab;border-radius:3px 3px 0 0;"></div>
<svg style="left:11px;top:784.5px" width="48" height="15" viewBox="0 0 48 15"><circle cx="7" cy="7.3" r="6" fill="#fcc56c" stroke="#1a2a30" stroke-width="1"/><circle cx="23.3" cy="7.3" r="6.3" fill="#16262d"/><path d="M19.8 5L26.8 5L23.3 10.5Z" fill="#e6e8e0"/><circle cx="39.5" cy="7.3" r="6" fill="#fcc56c" stroke="#1a2a30" stroke-width="1"/><path d="M36.5 10.5L40.5 6.3" stroke="#1a2a30" stroke-width="1.8"/><circle cx="41.3" cy="5.3" r="2.1" fill="#1a2a30"/><path d="M41.3 5.3L43.5 3" stroke="#fcc56c" stroke-width="1.3"/></svg>
<div class="t" style="left:61.5px;top:784.3px;height:14px;line-height:14px;font-size:10.5px;color:#14242a;letter-spacing:0.1px">MIDI Agent</div>
<svg style="left:119px;top:785px" width="11" height="12.5" viewBox="0 0 11 12.5"><g fill="none" stroke="#7674e2" stroke-width="1.4" stroke-linecap="round"><path d="M2.3 3.5L3 7.5M4.3 1.6L4.6 7M6.4 1.4L6.2 7M8.3 2.6L7.7 7.5M10 5.8L8.5 8.5"/></g><path d="M2.4 7L8.6 7.3L8.3 10Q7.5 12.2 5.5 12.2Q3.5 12.2 2.8 10Z" fill="#7674e2"/></svg>
<svg style="left:214px;top:785px" width="31" height="14" viewBox="0 0 31 14"><circle cx="7" cy="6.8" r="6.3" fill="#16262d"/><path d="M3.5 6.5Q4 3.5 7.5 3.8M7.5 3.8L6 2.5M7.5 3.8L6 5.2M10.5 7Q10 10 6.5 9.8M6.5 9.8L8 8.5M6.5 9.8L8 11" fill="none" stroke="#e6e8e0" stroke-width="1.2"/><circle cx="23.5" cy="6.8" r="6.3" fill="#16262d"/><path d="M20.5 3.8H25.5L26.5 4.8V9.8H20.5Z" fill="#e6e8e0"/><rect x="22" y="3.8" width="2.5" height="2" fill="#16262d"/></svg>
<div style="left:94px;top:800px;width:1px;height:170px;background:#293e47;"></div>
<div class="t" style="left:14px;top:802.0px;height:14px;line-height:14px;font-size:10.5px;">Sidechain</div>
<div style="left:14.3px;top:816.2px;width:72.4px;height:12.8px;background:#1e333b;border:1px solid #182a31;"><div class="t" style="left:1.5px;top:-0.8px;height:12px;line-height:12px;font-size:10.5px">No Input</div><svg style="left:62px;top:2.5px" width="7" height="5.5" viewBox="0 0 7 5.5"><path d="M0 0H7L3.5 5.5Z" fill="#e6e8e0"/></svg></div>
<div style="left:14.3px;top:832px;width:72.4px;height:12.8px;background:#304851;border:1px solid #1a2d34;"></div>
<div class="t" style="left:14.5px;top:849.5px;height:14px;line-height:14px;font-size:10.5px;width:72px;text-align:center;">Gain</div>
<div class="t" style="left:14.5px;top:885.5px;height:14px;line-height:14px;font-size:10.5px;width:72px;text-align:center;">0.00 dB</div>
<div class="t" style="left:14.5px;top:899.7px;height:14px;line-height:14px;font-size:10.5px;width:72px;text-align:center;">Mix</div>
<div class="t" style="left:14.5px;top:935.7px;height:14px;line-height:14px;font-size:10.5px;width:72px;text-align:center;">100 %</div>
<svg style="left:0;top:0" width="110" height="983" viewBox="0 0 110 983"><path d="M41.8 883.8A11.8 11.8 0 1 1 58.4 883.8" fill="none" stroke="#263c45" stroke-width="1.8"/><path d="M41.8 883.8A11.8 11.8 0 0 1 44.0 865.4" fill="none" stroke="#b3c4ca" stroke-width="2"/><path d="M50.1 875.5L44.5 866.2" stroke="#1e333b" stroke-width="2"/></svg>
<svg style="left:0;top:0" width="110" height="983" viewBox="0 0 110 983"><path d="M41.8 935.3A11.8 11.8 0 1 1 58.4 935.3" fill="none" stroke="#263c45" stroke-width="1.8"/><path d="M41.8 935.3A11.8 11.8 0 1 1 58.4 935.3" fill="none" stroke="#b3c4ca" stroke-width="2"/><path d="M50.1 927.0L57.7 934.6" stroke="#1e333b" stroke-width="2"/></svg>
<div style="left:14.5px;top:953.5px;width:72.5px;height:12px;background:#1e333b;"><div class="t" style="left:0;top:0;width:72.5px;height:12px;line-height:12px;text-align:center;font-size:10.5px;color:#8ea0a4;font-weight:normal;letter-spacing:0.3px">Mute</div></div>
<div style="left:102px;top:807.5px;width:140px;height:141px;background:#04202a;border-radius:2px;"></div>
<div style="left:102.5px;top:935.5px;width:12px;height:12px;border:2px solid #f2d27a;border-radius:50%;"></div>
<div style="left:102px;top:954px;width:67.5px;height:11.5px;background:#304851;border:1px solid #1e333b;"><div class="t" style="left:1px;top:-1px;height:11.5px;line-height:11.5px;font-size:10.5px">none</div></div>
<div style="left:174.5px;top:954px;width:67.5px;height:11.5px;background:#304851;border:1px solid #1e333b;"><div class="t" style="left:1px;top:-1px;height:11.5px;line-height:11.5px;font-size:10.5px">none</div></div>
<div style="left:3px;top:828px;width:3.5px;height:104px;background:repeating-linear-gradient(180deg,#2d434c 0,#2d434c 2px,transparent 2px,transparent 4px);"></div>
<div style="left:249.5px;top:823px;width:1.5px;height:108px;background:#1e333b;"></div>
<div style="left:252.5px;top:823px;width:1.5px;height:108px;background:#1e333b;"></div>
<div style="left:249px;top:829.5px;width:5px;height:1px;background:#2f4650;"></div>
<div style="left:256px;top:783.5px;width:1655px;height:187px;background:#2f4650;border-radius:2px;"></div>
<div class="t" style="left:256.5px;top:869.0px;height:14px;line-height:14px;font-size:10.5px;width:1654px;text-align:center;">Drop Audio Effects Here</div>
<div style="left:0px;top:972px;width:1919px;height:11px;background:#20343c;"></div>
<div style="left:1742.5px;top:979.3px;width:18.5px;height:4px;background:#fcc56c;"></div>
<div style="left:1839.3px;top:978px;width:24.5px;height:7px;border:1.5px solid #9fb0b3;border-radius:3px;"></div>
<div style="left:287px;top:64px;width:640px;height:670px;background:#000;border-radius:0 0 4px 4px;"></div>
<div style="left:287px;top:64px;width:640px;height:30px;background:#f2f2f2;"></div>
<div style="left:295.5px;top:71px;height:16px;line-height:16px;font-size:12.4px;color:#111;white-space:nowrap">MIDI Agent/5-MIDI Agent</div>
<div style="left:907px;top:71px;width:18.8px;height:18.5px;background:#cf4848;"><svg style="left:5.5px;top:6px" width="8" height="8" viewBox="0 0 8 8"><path d="M1.5 1.5L6.5 6.5M6.5 1.5L1.5 6.5" stroke="#fff" stroke-width="1.5"/></svg></div>
<div style="left:460px;top:99px;width:446px;height:41.5px;background:#2d2d2f;border-radius:9px;"></div>
<div class="j" style="left:460px;top:107.7px;width:437.5px;text-align:right;font-size:13px;line-height:14px;letter-spacing:-0.05px">write a chord progression that uses 4 voices for each chord and builds&nbsp;<br>tension until a satisfying uplifting resolve at the end</div>
<div style="left:307px;top:161px;width:447px;height:84px;background:#3e5c8b;border-radius:9px;"></div>
<div class="j" style="left:317px;top:170px;font-size:13px;line-height:14px">Here's a dark yet uplifting D minor chord progression with 4 voices. It<br>starts with Dm and gradually builds tension through Gm, Bb, C, A7, Bb,<br>C, and finally resolves to a bright D major chord. The progression uses<br>strategic voice leading and increasing velocity to create a sense of<br>growing intensity before the satisfying major resolution at the end.</div>
<div style="left:297px;top:399.5px;width:620px;height:89px;background:#2d2d2f;border-radius:6px;"></div>
<div class="j" style="left:301px;top:403px;font-size:13px;line-height:15px;color:#9a9a9c">Enter prompt here...</div>
<div style="left:297px;top:493.5px;width:99px;height:30px;background:#2d2d2f;border-radius:6px;"><div class="jw" style="left:0;top:0;width:99px;height:30px;line-height:31px;text-align:center;font-size:14px;">Send</div></div>
<div style="left:401px;top:493.5px;width:99px;height:30px;background:#2d2d2f;border-radius:6px;"><div class="jw" style="left:0;top:0;width:99px;height:30px;line-height:31px;text-align:center;font-size:14px;">Save MIDI</div></div>
<div style="left:505px;top:493.5px;width:99px;height:30px;background:#2d2d2f;border-radius:6px;"><div class="jw" style="left:0;top:0;width:99px;height:30px;line-height:31px;text-align:center;font-size:14px;">Drag MIDI</div></div>
<div style="left:609px;top:493.5px;width:99px;height:30px;background:#2d2d2f;border-radius:6px;"><div class="jw" style="left:0;top:0;width:99px;height:30px;line-height:31px;text-align:center;font-size:14px;transform:scaleX(0.863);">Audio to MIDI</div></div>
<div style="left:713px;top:493.5px;width:99px;height:30px;background:#2d2d2f;border-radius:6px;"><div class="jw" style="left:0;top:0;width:99px;height:30px;line-height:31px;text-align:center;font-size:14px;">Clear Chat</div></div>
<div style="left:817px;top:493.5px;width:100px;height:30px;background:#2d2d2f;border-radius:6px;"><div class="jw" style="left:0;top:0;width:100px;height:30px;line-height:31px;text-align:center;font-size:14px;">Settings</div></div>
<div class="j" style="left:302px;top:569px;height:16px;line-height:16px;font-size:13px;letter-spacing:0.2px">API Provider:</div>
<div style="left:402px;top:564px;width:199.5px;height:25px;background:#2d2d2f;border-radius:6px;"><div class="jw" style="left:7px;top:0;height:25px;line-height:26px;font-size:13px;">Anthropic</div><svg style="left:173.0px;top:7.7px" width="24" height="11" viewBox="0 0 24 11"><path d="M1 2.5Q6 3 12 8Q18 3 23 2.5" fill="none" stroke="#7192b8" stroke-width="1.3"/></svg></div>
<div class="j" style="left:617px;top:569px;height:16px;line-height:16px;font-size:13px;letter-spacing:0.2px">Model:</div>
<div style="left:717px;top:564px;width:200px;height:25px;background:#2d2d2f;border-radius:6px;"><div class="jw" style="left:7px;top:0;height:25px;line-height:26px;font-size:13px;transform:scaleX(0.84);transform-origin:0 50%;">claude-3-7-sonnet-20250219</div><svg style="left:173.5px;top:7.7px" width="24" height="11" viewBox="0 0 24 11"><path d="M1 2.5Q6 3 12 8Q18 3 23 2.5" fill="none" stroke="#7192b8" stroke-width="1.3"/></svg></div>
<div class="j" style="left:302px;top:599px;height:16px;line-height:16px;font-size:13px;letter-spacing:0.2px">Key:</div>
<div style="left:402px;top:594px;width:199.5px;height:25px;background:#2d2d2f;border-radius:6px;"><div class="jw" style="left:7px;top:0;height:25px;line-height:26px;font-size:13px;">D</div><svg style="left:173.0px;top:7.7px" width="24" height="11" viewBox="0 0 24 11"><path d="M1 2.5Q6 3 12 8Q18 3 23 2.5" fill="none" stroke="#7192b8" stroke-width="1.3"/></svg></div>
<div class="j" style="left:617px;top:599px;height:16px;line-height:16px;font-size:13px;letter-spacing:0.2px">Scale:</div>
<div style="left:717px;top:594px;width:200px;height:25px;background:#2d2d2f;border-radius:6px;"><div class="jw" style="left:7px;top:0;height:25px;line-height:26px;font-size:13px;">Minor</div><svg style="left:173.5px;top:7.7px" width="24" height="11" viewBox="0 0 24 11"><path d="M1 2.5Q6 3 12 8Q18 3 23 2.5" fill="none" stroke="#7192b8" stroke-width="1.3"/></svg></div>
<div class="j" style="left:302px;top:629px;height:16px;line-height:16px;font-size:13px;letter-spacing:0.2px">Notation Type:</div>
<div style="left:402px;top:624px;width:199.5px;height:25px;background:#2d2d2f;border-radius:6px;"><div class="jw" style="left:7px;top:0;height:25px;line-height:26px;font-size:13px;">(No Type)</div><svg style="left:173.0px;top:7.7px" width="24" height="11" viewBox="0 0 24 11"><path d="M1 2.5Q6 3 12 8Q18 3 23 2.5" fill="none" stroke="#7192b8" stroke-width="1.3"/></svg></div>
<div class="j" style="left:617px;top:629px;height:16px;line-height:16px;font-size:13px;letter-spacing:0.2px">Note Length:</div>
<div style="left:717px;top:624px;width:200px;height:25px;background:#2d2d2f;border-radius:6px;"><div class="jw" style="left:7px;top:0;height:25px;line-height:26px;font-size:13px;">Any</div><svg style="left:173.5px;top:7.7px" width="24" height="11" viewBox="0 0 24 11"><path d="M1 2.5Q6 3 12 8Q18 3 23 2.5" fill="none" stroke="#7192b8" stroke-width="1.3"/></svg></div>
<div class="j" style="left:302px;top:659px;height:16px;line-height:16px;font-size:13px;letter-spacing:0.2px">Length (bars):</div>
<div style="left:402px;top:654px;width:199.5px;height:25px;background:#2d2d2f;border-radius:6px;"><div class="jw" style="left:7px;top:0;height:25px;line-height:26px;font-size:13px;">8 bars</div><svg style="left:173.0px;top:7.7px" width="24" height="11" viewBox="0 0 24 11"><path d="M1 2.5Q6 3 12 8Q18 3 23 2.5" fill="none" stroke="#7192b8" stroke-width="1.3"/></svg></div>
<div class="j" style="left:617px;top:659px;height:16px;line-height:16px;font-size:13px;letter-spacing:0.2px">Creativity:</div>
<div style="left:717px;top:654px;width:200px;height:25px;background:#2d2d2f;border-radius:6px;"><div class="jw" style="left:7px;top:0;height:25px;line-height:26px;font-size:13px;">YOLO</div><svg style="left:173.5px;top:7.7px" width="24" height="11" viewBox="0 0 24 11"><path d="M1 2.5Q6 3 12 8Q18 3 23 2.5" fill="none" stroke="#7192b8" stroke-width="1.3"/></svg></div>
<div style="left:893px;top:695.3px;width:27.4px;height:27.4px;background:#2d2d2f;border-radius:6px;"><svg style="left:9.5px;top:8.5px" width="11" height="11" viewBox="0 0 11 11"><path d="M7.5 1Q3 2 3.5 6Q4 9.5 8 10Q2 11 1.5 6Q1.5 1.5 7.5 1Z" fill="#e8e8e8"/></svg></div>
</body></html>
